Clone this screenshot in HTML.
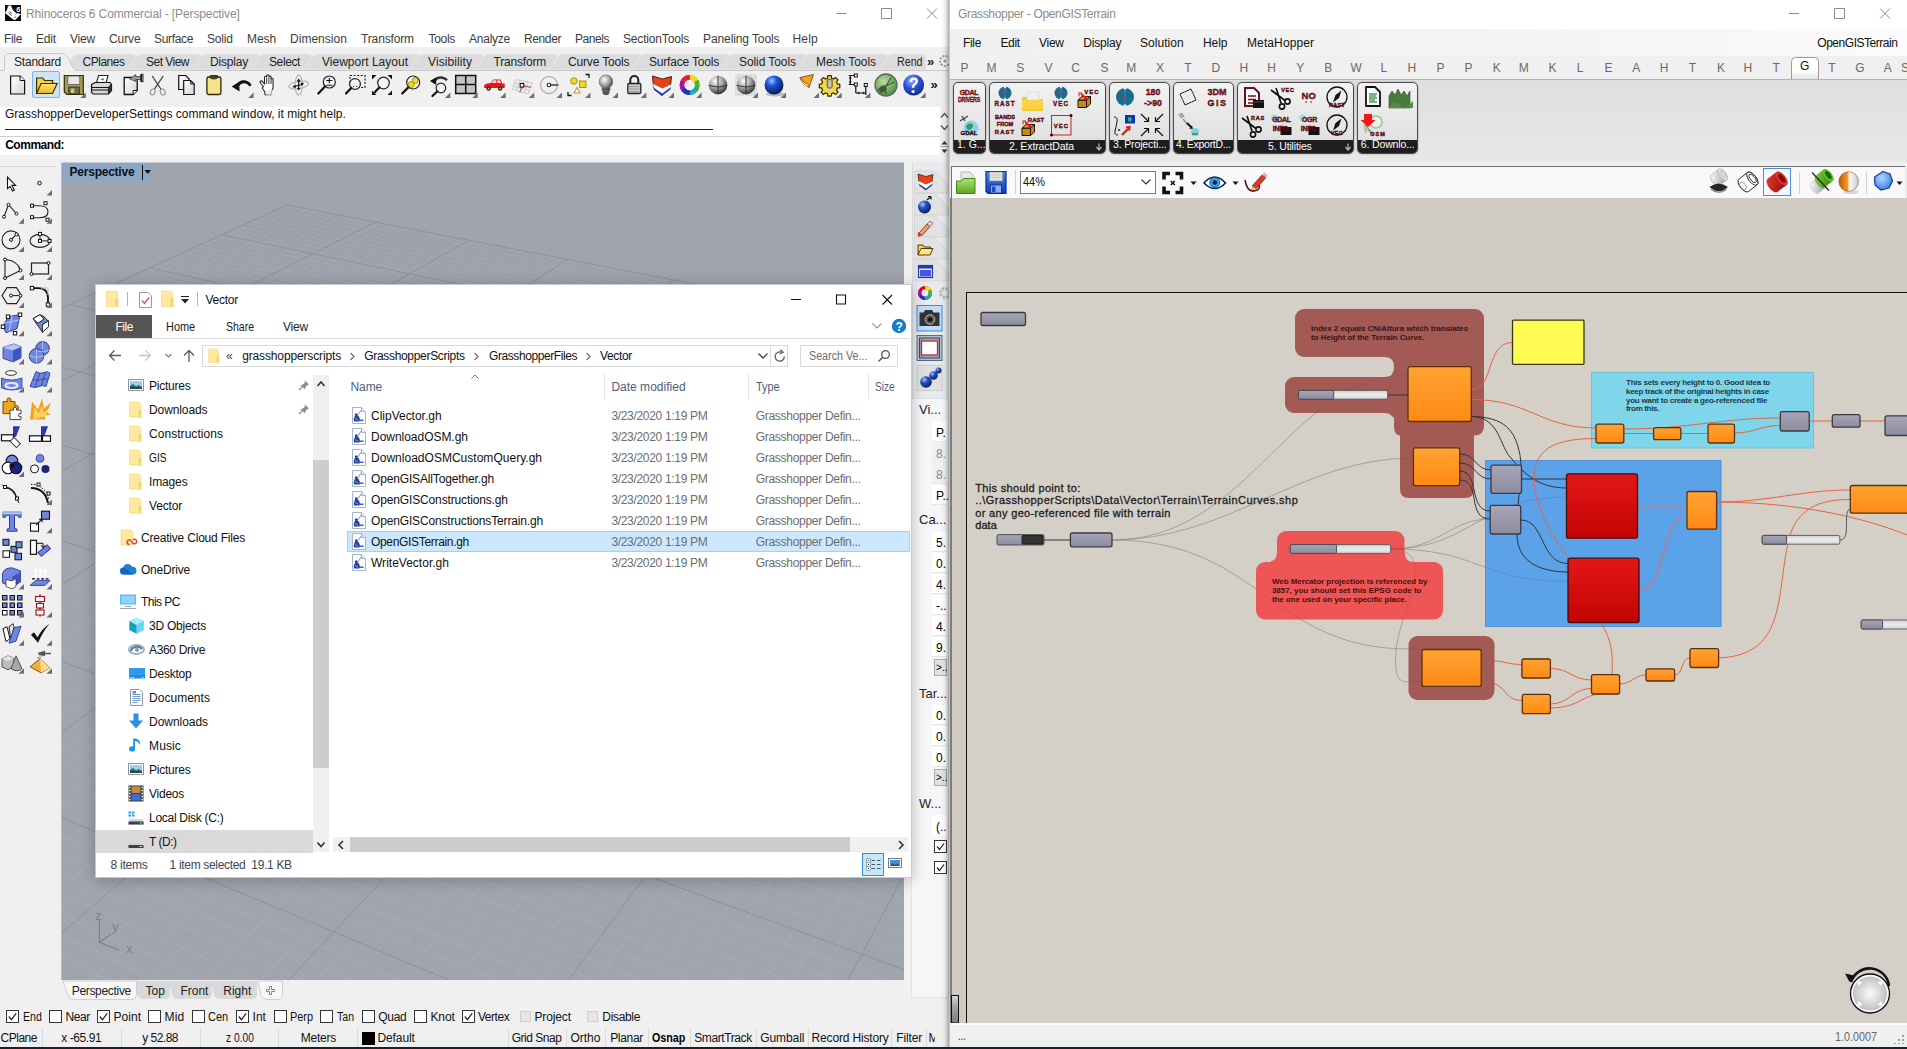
<!DOCTYPE html>
<html><head><meta charset="utf-8"><title>screen</title>
<style>
*{box-sizing:border-box;margin:0;padding:0}
html,body{width:1907px;height:1049px;overflow:hidden;background:#f0f0f0;font-family:"Liberation Sans",sans-serif;font-size:12px;color:#000}
.a{position:absolute}
.t{position:absolute;white-space:pre;line-height:1}
svg{overflow:visible}

</style></head><body>
<div class="a" style="left:0px;top:0px;width:949px;height:1049px;background:#f0f0f0;"></div>
<div class="a" style="left:0px;top:0px;width:949px;height:47px;background:#fff;"></div>
<div class="t" style="left:26.0px;top:7.8px;font-size:12.00px;color:#8c8c8c;letter-spacing:-0.11px;">Rhinoceros 6 Commercial - [Perspective]</div>
<svg class="a" style="left:5px;top:5px;" width="16" height="16" viewBox="0 0 16 16"><rect width="16" height="16" fill="#0a0a0a"/><path d="M2.500 0.800l3.500-0.300 1.800 4.500 3 2.700 5.200 1.300-5.500 5.800h-2l-8.500-6.800 1.500-2.500z" fill="#fff"/><path d="M1.200 5.500l1.800-4.500M3.500 8l3 2.500M4.500 6.500l2.500 2M9.500 13l1-1.500" stroke="#111" stroke-width="0.800"/><path d="M10.500 9l1.500-1" stroke="#111" stroke-width="0.700"/></svg>
<div class="t" style="left:16.2px;top:5.7px;font-size:7.50px;color:#fff;font-weight:bold;">6</div>
<svg class="a" style="left:830px;top:0px;" width="119" height="27" viewBox="0 0 119 27"><path d="M6.500 13.500h10M51.500 8.500h10v10h-10zM97 8.500l10 10M107 8.500l-10 10" fill="none" stroke="#8a8a8a" stroke-width="1"/></svg>
<div class="t" style="left:4.0px;top:32.8px;font-size:12.00px;color:#3c3c3c;letter-spacing:-0.34px;">File</div>
<div class="t" style="left:36.0px;top:32.8px;font-size:12.00px;color:#3c3c3c;letter-spacing:-0.17px;">Edit</div>
<div class="t" style="left:70.0px;top:32.8px;font-size:12.00px;color:#3c3c3c;letter-spacing:-0.20px;">View</div>
<div class="t" style="left:109.0px;top:32.8px;font-size:12.00px;color:#3c3c3c;letter-spacing:-0.10px;">Curve</div>
<div class="t" style="left:154.0px;top:32.8px;font-size:12.00px;color:#3c3c3c;letter-spacing:-0.34px;">Surface</div>
<div class="t" style="left:207.0px;top:32.8px;font-size:12.00px;color:#3c3c3c;letter-spacing:-0.22px;">Solid</div>
<div class="t" style="left:247.0px;top:32.8px;font-size:12.00px;color:#3c3c3c;letter-spacing:-0.09px;">Mesh</div>
<div class="t" style="left:290.0px;top:32.8px;font-size:12.00px;color:#3c3c3c;letter-spacing:0.03px;">Dimension</div>
<div class="t" style="left:361.0px;top:32.8px;font-size:12.00px;color:#3c3c3c;letter-spacing:-0.14px;">Transform</div>
<div class="t" style="left:428.5px;top:32.8px;font-size:12.00px;color:#3c3c3c;letter-spacing:-0.30px;">Tools</div>
<div class="t" style="left:469.0px;top:32.8px;font-size:12.00px;color:#3c3c3c;letter-spacing:-0.24px;">Analyze</div>
<div class="t" style="left:524.0px;top:32.8px;font-size:12.00px;color:#3c3c3c;letter-spacing:-0.39px;">Render</div>
<div class="t" style="left:575.0px;top:32.8px;font-size:12.00px;color:#3c3c3c;letter-spacing:-0.45px;">Panels</div>
<div class="t" style="left:623.0px;top:32.8px;font-size:12.00px;color:#3c3c3c;letter-spacing:-0.17px;">SectionTools</div>
<div class="t" style="left:703.0px;top:32.8px;font-size:12.00px;color:#3c3c3c;letter-spacing:-0.10px;">Paneling Tools</div>
<div class="t" style="left:792.5px;top:32.8px;font-size:12.00px;color:#3c3c3c;letter-spacing:0.20px;">Help</div>
<svg class="a" style="left:0px;top:0px;" width="949" height="72" viewBox="0 0 949 72"><path d="M62.599999999999994 70 C68.6 70 70.6 54 77.6 54 H132.4 Q136.4 54 136.4 58 V70 Z" fill="#dcdcdc" stroke="#e9e9e9" stroke-width="1"/><path d="M126 70 C132 70 134 54 141 54 H197 Q201 54 201 58 V70 Z" fill="#dcdcdc" stroke="#e9e9e9" stroke-width="1"/><path d="M190 70 C196 70 198 54 205 54 H256 Q260 54 260 58 V70 Z" fill="#dcdcdc" stroke="#e9e9e9" stroke-width="1"/><path d="M249 70 C255 70 257 54 264 54 H308 Q312 54 312 58 V70 Z" fill="#dcdcdc" stroke="#e9e9e9" stroke-width="1"/><path d="M302 70 C308 70 310 54 317 54 H416 Q420 54 420 58 V70 Z" fill="#dcdcdc" stroke="#e9e9e9" stroke-width="1"/><path d="M408 70 C414 70 416 54 423 54 H480 Q484 54 484 58 V70 Z" fill="#dcdcdc" stroke="#e9e9e9" stroke-width="1"/><path d="M473.5 70 C479.5 70 481.5 54 488.5 54 H554 Q558 54 558 58 V70 Z" fill="#dcdcdc" stroke="#e9e9e9" stroke-width="1"/><path d="M548 70 C554 70 556 54 563 54 H637.4 Q641.4 54 641.4 58 V70 Z" fill="#dcdcdc" stroke="#e9e9e9" stroke-width="1"/><path d="M629 70 C635 70 637 54 644 54 H727 Q731 54 731 58 V70 Z" fill="#dcdcdc" stroke="#e9e9e9" stroke-width="1"/><path d="M719 70 C725 70 727 54 734 54 H804 Q808 54 808 58 V70 Z" fill="#dcdcdc" stroke="#e9e9e9" stroke-width="1"/><path d="M796 70 C802 70 804 54 811 54 H884 Q888 54 888 58 V70 Z" fill="#dcdcdc" stroke="#e9e9e9" stroke-width="1"/><path d="M877 70 C883 70 885 54 892 54 H922 Q926 54 926 58 V70 Z" fill="#dcdcdc" stroke="#e9e9e9" stroke-width="1"/><path d="M0 70.5 H4.5 V58 Q4.5 53.5 9 53.5 H62 C70 53.5 70 70.5 78 70.5 H949" fill="#f0f0f0" stroke="#c9c9c9" stroke-width="1"/></svg>
<div class="t" style="left:14.0px;top:56.2px;font-size:12.00px;color:#1e1e1e;letter-spacing:-0.21px;">Standard</div>
<div class="t" style="left:82.6px;top:56.2px;font-size:12.00px;color:#1e1e1e;letter-spacing:-0.51px;">CPlanes</div>
<div class="t" style="left:146.0px;top:56.2px;font-size:12.00px;color:#1e1e1e;letter-spacing:-0.52px;">Set View</div>
<div class="t" style="left:210.0px;top:56.2px;font-size:12.00px;color:#1e1e1e;letter-spacing:-0.19px;">Display</div>
<div class="t" style="left:269.0px;top:56.2px;font-size:12.00px;color:#1e1e1e;letter-spacing:-0.39px;">Select</div>
<div class="t" style="left:322.0px;top:56.2px;font-size:12.00px;color:#1e1e1e;letter-spacing:0.01px;">Viewport Layout</div>
<div class="t" style="left:428.0px;top:56.2px;font-size:12.00px;color:#1e1e1e;letter-spacing:0.09px;">Visibility</div>
<div class="t" style="left:493.5px;top:56.2px;font-size:12.00px;color:#1e1e1e;letter-spacing:-0.19px;">Transform</div>
<div class="t" style="left:568.0px;top:56.2px;font-size:12.00px;color:#1e1e1e;letter-spacing:-0.16px;">Curve Tools</div>
<div class="t" style="left:649.0px;top:56.2px;font-size:12.00px;color:#1e1e1e;letter-spacing:-0.19px;">Surface Tools</div>
<div class="t" style="left:739.0px;top:56.2px;font-size:12.00px;color:#1e1e1e;letter-spacing:-0.08px;">Solid Tools</div>
<div class="t" style="left:816.0px;top:56.2px;font-size:12.00px;color:#1e1e1e;letter-spacing:-0.05px;">Mesh Tools</div>
<div class="t" style="left:897.0px;top:56.2px;font-size:12.00px;color:#1e1e1e;transform:scaleX(0.889);transform-origin:0 0;">Rend</div>
<div class="t" style="left:927.0px;top:55.0px;font-size:13.00px;color:#222;font-weight:bold;">»</div>
<svg class="a" style="left:938px;top:52px;" width="11" height="20" viewBox="0 0 11 20"><circle cx="7" cy="9" r="5" fill="none" stroke="#9a9a9a" stroke-width="2" stroke-dasharray="2 1.4"/><circle cx="7" cy="9" r="1.6" fill="#9a9a9a"/></svg>
<div class="a" style="left:32px;top:71px;width:28px;height:27px;background:#cce4f7;border:1px solid #7eb4ea;border-radius:2px;"></div>
<div class="a" style="left:0px;top:107px;width:940px;height:29px;background:#fff;"></div>
<div class="a" style="left:0px;top:136px;width:940px;height:1px;background:#d0d0d0;"></div>
<div class="a" style="left:0px;top:137px;width:940px;height:18px;background:#fff;"></div>
<div class="t" style="left:5.0px;top:107.8px;font-size:12.00px;color:#111;letter-spacing:0.00px;">GrasshopperDeveloperSettings command window, it might help.</div>
<div class="a" style="left:5px;top:129px;width:708px;height:1px;background:#222;"></div>
<div class="t" style="left:5.2px;top:138.7px;font-size:12.00px;color:#000;letter-spacing:-0.48px;font-weight:bold;">Command:</div>
<svg class="a" style="left:940px;top:107px;" width="9" height="50" viewBox="0 0 9 50"><path d="M1 10.5l3.5-4 3.5 4M1 18.5l3.5 4 3.5-4" fill="none" stroke="#555" stroke-width="1.3"/><path d="M1.5 37.5h6l-3-3.5zM1.5 42.5h6l-3 3.5z" fill="#333"/><path d="M0 39.5h9" stroke="#aaa"/></svg>
<div class="a" style="left:61px;top:162px;width:843px;height:818px;background:#9fa4ad;border-top:1px solid #c9ced8;border-left:1px solid #b4bac6;"></div>
<svg class="a" style="left:62px;top:163px;overflow:hidden;" width="842" height="817" viewBox="62 163 842 817"><defs><linearGradient id="gmn" gradientUnits="userSpaceOnUse" x1="0" y1="200" x2="0" y2="980"><stop offset="0" stop-color="#969ca5"/><stop offset="0.35" stop-color="#a3a8b1"/><stop offset="1" stop-color="#a9aeb6"/></linearGradient></defs><path d="M295.3 206.6L-26741.8 12746.1M280.5 207.8L15308.1 3143.4M304.0 208.3L-26472.1 12747.2M274.2 210.6L15704.6 3245.3M312.7 209.9L-26202.5 12748.2M267.9 213.5L16124.7 3353.2M321.5 211.7L-25932.8 12749.3M261.5 216.5L16570.5 3467.8M330.3 213.4L-25663.2 12750.3M255.0 219.5L17044.5 3589.6M339.2 215.1L-25393.5 12751.3M248.5 222.5L17549.5 3719.3M348.1 216.8L-25123.8 12752.4M241.9 225.5L18088.5 3857.8M357.1 218.6L-24854.2 12753.4M235.2 228.5L18665.2 4006.0M366.1 220.3L-24584.5 12754.4M228.5 231.6L19283.6 4164.9M384.3 223.8L-24045.2 12756.5M214.9 237.9L20665.1 4519.9M393.4 225.6L-23775.6 12757.6M207.9 241.1L21439.9 4719.0M402.7 227.4L-23505.9 12758.6M200.9 244.3L22280.3 4935.0M411.9 229.2L-23236.2 12759.6M193.8 247.6L23195.0 5170.0M421.3 231.0L-22966.6 12760.7M186.7 250.8L24194.2 5426.8M430.7 232.8L-22696.9 12761.7M179.5 254.2L25290.2 5708.4M440.1 234.7L-22427.3 12762.7M172.2 257.5L26497.8 6018.7M449.6 236.5L-22157.6 12763.8M164.8 260.9L27835.0 6362.3M459.1 238.4L-21888.0 12764.8M157.4 264.3L29323.8 6744.9M478.4 242.1L-21348.6 12766.9M142.2 271.3L32872.6 7656.8M488.1 244.0L-21079.0 12767.9M134.5 274.8L35010.6 8206.2M497.9 245.9L-20809.3 12769.0M126.7 278.4L37462.1 8836.1M507.7 247.8L-20539.7 12770.0M118.9 282.0L40301.5 9565.7M517.6 249.7L-20270.0 12771.0M110.9 285.6L43628.8 10420.7M527.6 251.6L-20000.4 12772.1M102.9 289.3L47581.5 11436.4M537.6 253.6L-19730.7 12773.1M94.8 293.1L52354.4 12662.8M547.6 255.5L-19461.0 12774.2M86.5 296.8L53546.7 13055.0M557.8 257.5L-19191.4 12775.2M78.2 300.7L53074.5 13053.2M578.2 261.5L-18652.1 12777.3M61.3 308.4L52130.0 13049.6M588.5 263.5L-18382.4 12778.3M52.8 312.4L51657.8 13047.8M598.9 265.5L-18112.8 12779.3M44.1 316.4L51185.5 13045.9M609.3 267.5L-17843.1 12780.4M35.3 320.4L50713.3 13044.1M619.8 269.5L-17573.4 12781.4M26.4 324.5L50241.0 13042.3M630.4 271.6L-17303.8 12782.5M17.4 328.6L49768.8 13040.5M641.0 273.6L-17034.1 12783.5M8.3 332.8L49296.5 13038.7M651.7 275.7L-16764.5 12784.5M-0.9 337.0L48824.3 13036.9M662.4 277.8L-16494.8 12785.6M-10.2 341.3L48352.0 13035.0M684.1 282.0L-15955.5 12787.6M-29.2 350.0L47407.6 13031.4M695.1 284.2L-15685.8 12788.7M-38.9 354.5L46935.3 13029.6M706.1 286.3L-15416.2 12789.7M-48.6 358.9L46463.1 13027.8M717.2 288.4L-15146.5 12790.8M-58.5 363.5L45990.8 13026.0M728.4 290.6L-14876.9 12791.8M-68.5 368.1L45518.6 13024.1M739.6 292.8L-14607.2 12792.8M-78.7 372.7L45046.3 13022.3M750.9 295.0L-14337.6 12793.9M-88.9 377.5L44574.1 13020.5M762.3 297.2L-14067.9 12794.9M-99.3 382.2L44101.9 13018.7M773.8 299.4L-13798.2 12795.9M-109.8 387.1L43629.6 13016.9M796.9 303.9L-13258.9 12798.0M-131.3 396.9L42685.1 13013.2M808.5 306.2L-12989.3 12799.1M-142.2 401.9L42212.9 13011.4M820.3 308.4L-12719.6 12800.1M-153.3 407.0L41740.6 13009.6M832.1 310.7L-12450.0 12801.1M-164.5 412.2L41268.4 13007.8M844.0 313.0L-12180.3 12802.2M-175.9 417.4L40796.1 13006.0M856.0 315.4L-11910.6 12803.2M-187.4 422.7L40323.9 13004.2M868.0 317.7L-11641.0 12804.2M-199.0 428.0L39851.7 13002.3M880.2 320.1L-11371.3 12805.3M-210.9 433.5L39379.4 13000.5M892.4 322.4L-11101.7 12806.3M-222.8 439.0L38907.2 12998.7M917.0 327.2L-10562.4 12808.4M-247.3 450.2L37962.7 12995.1M929.5 329.6L-10292.7 12809.4M-259.7 455.9L37490.4 12993.3M942.0 332.1L-10023.0 12810.5M-272.4 461.7L37018.2 12991.4M954.6 334.5L-9753.4 12811.5M-285.2 467.6L36546.0 12989.6M967.3 337.0L-9483.7 12812.5M-298.2 473.6L36073.7 12987.8M980.1 339.5L-9214.1 12813.6M-311.4 479.7L35601.5 12986.0M993.0 342.0L-8944.4 12814.6M-324.8 485.8L35129.2 12984.2M1006.0 344.5L-8674.8 12815.7M-338.3 492.0L34657.0 12982.4M1019.0 347.0L-8405.1 12816.7M-352.1 498.3L34184.7 12980.5M1045.4 352.1L-7865.8 12818.8M-380.2 511.3L33240.2 12976.9M1058.7 354.7L-7596.1 12819.8M-394.6 517.9L32768.0 12975.1M1072.1 357.3L-7326.5 12820.8M-409.1 524.6L32295.8 12973.3M1085.6 359.9L-7056.8 12821.9M-423.9 531.4L31823.5 12971.5M1099.2 362.6L-6787.2 12822.9M-439.0 538.3L31351.3 12969.6M1112.9 365.2L-6517.5 12824.0M-454.2 545.3L30879.0 12967.8M1126.7 367.9L-6247.8 12825.0M-469.7 552.4L30406.8 12966.0M1140.6 370.6L-5978.2 12826.0M-485.4 559.6L29934.5 12964.2M1154.6 373.3L-5708.5 12827.1M-501.4 566.9L29462.3 12962.4M1182.8 378.8L-5169.2 12829.1M-534.1 581.9L28517.8 12958.7M1197.1 381.6L-4899.6 12830.2M-550.8 589.6L28045.6 12956.9M1211.5 384.4L-4629.9 12831.2M-567.8 597.4L27573.3 12955.1M1226.0 387.2L-4360.2 12832.3M-585.1 605.4L27101.1 12953.3M1240.5 390.0L-4090.6 12833.3M-602.6 613.4L26628.8 12951.5M1255.2 392.8L-3820.9 12834.3M-620.5 621.6L26156.6 12949.6M1270.0 395.7L-3551.3 12835.4M-638.6 630.0L25684.3 12947.8M1284.9 398.6L-3281.6 12836.4M-657.0 638.4L25212.1 12946.0M1299.9 401.5L-3012.0 12837.4M-675.8 647.0L24739.9 12944.2M1330.3 407.4L-2472.6 12839.5M-714.2 664.7L23795.4 12940.6M1345.6 410.4L-2203.0 12840.5M-734.0 673.8L23323.1 12938.7M1361.1 413.4L-1933.3 12841.6M-754.0 683.0L22850.9 12936.9M1376.7 416.4L-1663.7 12842.6M-774.5 692.4L22378.6 12935.1M1392.4 419.5L-1394.0 12843.7M-795.2 701.9L21906.4 12933.3M1408.2 422.5L-1124.4 12844.7M-816.4 711.6L21434.2 12931.5M1424.1 425.6L-854.7 12845.7M-837.9 721.5L20961.9 12929.7M1440.1 428.7L-585.0 12846.8M-859.9 731.6L20489.7 12927.8M1456.3 431.9L-315.4 12847.8M-882.2 741.9L20017.4 12926.0M1489.0 438.2L223.9 12849.9M-928.1 763.0L19072.9 12922.4M1505.5 441.4L493.6 12850.9M-951.7 773.8L18600.7 12920.6M1522.2 444.6L763.2 12852.0M-975.8 784.9L18128.4 12918.8M1539.0 447.9L1032.9 12853.0M-1000.3 796.1L17656.2 12916.9M1555.9 451.2L1302.6 12854.0M-1025.3 807.6L17184.0 12915.1M1573.0 454.5L1572.2 12855.1M-1050.8 819.3L16711.7 12913.3M1590.1 457.8L1841.9 12856.1M-1076.8 831.3L16239.5 12911.5M1607.5 461.2L2111.5 12857.1M-1103.3 843.4L15767.2 12909.7M1624.9 464.6L2381.2 12858.2M-1130.3 855.9L15295.0 12907.9M1660.2 471.4L2920.5 12860.3M-1186.1 881.5L14350.5 12904.2M1678.1 474.9L3190.2 12861.3M-1214.9 894.7L13878.2 12902.4M1696.1 478.4L3459.8 12862.3M-1244.2 908.2L13406.0 12900.6M1714.3 481.9L3729.5 12863.4M-1274.2 922.0L12933.8 12898.8M1732.6 485.5L3999.1 12864.4M-1304.9 936.0L12461.5 12897.0M1751.0 489.1L4268.8 12865.4M-1336.2 950.4L11989.3 12895.1M1769.6 492.7L4538.4 12866.5M-1368.1 965.1L11517.0 12893.3M1788.4 496.3L4808.1 12867.5M-1400.8 980.1L11044.8 12891.5M1807.3 500.0L5077.8 12868.6M-1434.3 995.5L10572.5 12889.7M1845.5 507.4L5617.1 12870.6M-1503.5 1027.3L9628.1 12886.1M1864.9 511.2L5886.7 12871.7M-1539.3 1043.7L9155.8 12884.2M1884.4 514.9L6156.4 12872.7M-1575.9 1060.5L8683.6 12882.4M1904.1 518.8L6426.0 12873.7M-1613.4 1077.8L8211.3 12880.6M1924.0 522.6L6695.7 12874.8M-1651.8 1095.4L7739.1 12878.8M1944.0 526.5L6965.4 12875.8M-1691.2 1113.5L7266.8 12877.0M1964.2 530.4L7235.0 12876.9M-1731.5 1132.0L6794.6 12875.2M1984.6 534.4L7504.7 12877.9M-1772.8 1151.0L6322.3 12873.3M2005.1 538.4L7774.3 12878.9M-1815.2 1170.5L5850.1 12871.5M2046.7 546.4L8313.6 12881.0M-1903.3 1210.9L4905.6 12867.9M2067.8 550.5L8583.3 12882.0M-1949.1 1232.0L4433.4 12866.1M2089.1 554.7L8853.0 12883.1M-1996.1 1253.6L3961.1 12864.3M2110.5 558.8L9122.6 12884.1M-2044.3 1275.7L3488.9 12862.4M2132.1 563.0L9392.3 12885.2M-2093.9 1298.5L3016.6 12860.6M2154.0 567.2L9661.9 12886.2M-2144.9 1321.9L2544.4 12858.8M2176.0 571.5L9931.6 12887.2M-2197.3 1346.0L2072.2 12857.0M2198.2 575.8L10201.2 12888.3M-2251.2 1370.8L1599.9 12855.2M2220.6 580.2L10470.9 12889.3M-2306.7 1396.2L1127.7 12853.4M2266.0 589.0L11010.2 12891.4M-2422.6 1449.5L183.2 12849.7M2289.0 593.4L11279.9 12892.4M-2483.2 1477.3L-289.1 12847.9M2312.2 598.0L11549.5 12893.5M-2545.6 1506.0L-761.3 12846.1M2335.6 602.5L11819.2 12894.5M-2610.0 1535.6L-1233.6 12844.3M2359.3 607.1L12088.8 12895.5M-2676.5 1566.1L-1705.8 12842.5M2383.1 611.7L12358.5 12896.6M-2745.1 1597.6L-2178.0 12840.6M2407.2 616.4L12628.2 12897.6M-2815.9 1630.2L-2650.3 12838.8M2431.5 621.1L12897.8 12898.6M-2889.2 1663.8L-3122.5 12837.0M2456.1 625.9L13167.5 12899.7M-2964.9 1698.6L-3594.8 12835.2M2505.8 635.5L13706.8 12901.8M-3124.3 1771.8L-4539.3 12831.6M2531.0 640.4L13976.4 12902.8M-3208.2 1810.4L-5011.5 12829.7M2556.5 645.4L14246.1 12903.8M-3295.2 1850.4L-5483.7 12827.9M2582.2 650.3L14515.8 12904.9M-3385.5 1891.8L-5956.0 12826.1M2608.1 655.4L14785.4 12905.9M-3479.1 1934.8L-6428.2 12824.3M2634.4 660.5L15055.1 12906.9M-3576.4 1979.5L-6900.5 12822.5M2660.8 665.6L15324.7 12908.0M-3677.5 2026.0L-7372.7 12820.7M2687.5 670.8L15594.4 12909.0M-3782.6 2074.3L-7845.0 12818.8M2714.5 676.0L15864.1 12910.1M-3892.0 2124.5L-8317.2 12817.0M2769.2 686.6L16403.4 12912.1M-4124.9 2231.5L-9261.7 12813.4M2797.0 692.0L16673.0 12913.2M-4248.9 2288.5L-9733.9 12811.6M2825.1 697.5L16942.7 12914.2M-4378.4 2348.0L-10206.2 12809.8M2853.4 703.0L17212.3 12915.2M-4513.9 2410.2L-10678.4 12807.9M2882.0 708.5L17482.0 12916.3M-4655.6 2475.3L-11150.7 12806.1M2910.9 714.1L17751.7 12917.3M-4804.1 2543.5L-11622.9 12804.3M2940.1 719.8L18021.3 12918.4M-4959.9 2615.1L-12095.2 12802.5M2969.6 725.5L18291.0 12919.4M-5123.4 2690.2L-12567.4 12800.7M2999.4 731.3L18560.6 12920.4M-5295.4 2769.2L-13039.6 12798.9M3059.9 743.0L19099.9 12922.5M-5667.2 2940.0L-13984.1 12795.2M3090.7 749.0L19369.6 12923.5M-5868.6 3032.5L-14456.4 12793.4M3121.7 755.0L19639.3 12924.6M-6081.6 3130.4L-14928.6 12791.6M3153.1 761.1L19908.9 12925.6M-6307.1 3234.0L-15400.9 12789.8M3184.8 767.3L20178.6 12926.7M-6546.3 3343.8L-15873.1 12788.0M3216.9 773.5L20448.2 12927.7M-6800.5 3460.6L-16345.4 12786.1M3249.2 779.8L20717.9 12928.7M-7071.1 3584.9L-16817.6 12784.3M3282.0 786.1L20987.5 12929.8M-7359.8 3717.5L-17289.8 12782.5M3315.1 792.6L21257.2 12930.8M-7668.4 3859.3L-17762.1 12780.7M3382.4 805.6L21796.5 12932.9M-8354.4 4174.4L-18706.6 12777.1M3416.5 812.2L22066.2 12933.9M-8737.0 4350.2L-19178.8 12775.2M3451.1 819.0L22335.8 12935.0M-9150.4 4540.1L-19651.1 12773.4M3486.1 825.7L22605.5 12936.0M-9598.2 4745.8L-20123.3 12771.6M3521.4 832.6L22875.1 12937.0M-10085.1 4969.5L-20595.5 12769.8M3557.1 839.5L23144.8 12938.1M-10616.4 5213.6L-21067.8 12768.0M3593.3 846.5L23414.5 12939.1M-11198.4 5480.9L-21540.0 12766.2M3629.8 853.6L23684.1 12940.1M-11838.8 5775.1L-22012.3 12764.3M3666.8 860.8L23953.8 12941.2M-12546.8 6100.4L-22484.5 12762.5M3742.0 875.4L24493.1 12943.3M-14213.5 6866.0L-23429.0 12758.9M3780.3 882.8L24762.7 12944.3M-15203.7 7320.9L-23901.3 12757.1M3819.0 890.3L25032.4 12945.3M-16326.3 7836.6L-24373.5 12755.3M3858.2 897.9L25302.1 12946.4M-17610.0 8426.3L-24845.7 12753.4M3897.8 905.6L25571.7 12947.4M-19092.1 9107.1L-25318.0 12751.6M3937.9 913.4L25841.4 12948.4M-20822.4 9902.0L-25790.2 12749.8M3978.5 921.3L26111.0 12949.5M-22868.8 10842.1L-26262.5 12748.0M4019.6 929.3L26380.7 12950.5M-25326.9 11971.3L-26734.7 12746.2M4061.1 937.3L26650.3 12951.5M4145.8 953.8L27189.7 12953.6M4188.9 962.1L27459.3 12954.7M4232.6 970.6L27729.0 12955.7M4276.8 979.2L27998.6 12956.7M4321.5 987.9L28268.3 12957.8M4366.8 996.6L28537.9 12958.8M4412.7 1005.6L28807.6 12959.8M4459.2 1014.6L29077.3 12960.9M4506.3 1023.7L29346.9 12961.9M4602.3 1042.3L29886.2 12964.0M4651.2 1051.8L30155.9 12965.0M4700.8 1061.5L30425.5 12966.1M4751.1 1071.2L30695.2 12967.1M4802.0 1081.1L30964.9 12968.1M4853.6 1091.1L31234.5 12969.2M4905.9 1101.3L31504.2 12970.2M4959.0 1111.6L31773.8 12971.3M5012.7 1122.0L32043.5 12972.3M5122.5 1143.3L32582.8 12974.4M5178.6 1154.2L32852.5 12975.4M5235.4 1165.2L33122.1 12976.4M5293.1 1176.4L33391.8 12977.5M5351.6 1187.7L33661.4 12978.5M5410.9 1199.2L33931.1 12979.6M5471.1 1210.9L34200.7 12980.6M5532.2 1222.8L34470.4 12981.6M5594.2 1234.8L34740.1 12982.7M5720.9 1259.4L35279.4 12984.7M5785.7 1272.0L35549.0 12985.8M5851.5 1284.8L35818.7 12986.8M5918.4 1297.7L36088.3 12987.9M5986.2 1310.9L36358.0 12988.9M6055.1 1324.3L36627.7 12989.9M6125.1 1337.8L36897.3 12991.0M6196.2 1351.6L37167.0 12992.0M6268.5 1365.7L37436.6 12993.0M6416.5 1394.4L37975.9 12995.1M6492.3 1409.1L38245.6 12996.2M6569.4 1424.1L38515.3 12997.2M6647.7 1439.3L38784.9 12998.2M6727.4 1454.7L39054.6 12999.3M6808.4 1470.4L39324.2 13000.3M6890.8 1486.4L39593.9 13001.3M6974.6 1502.7L39863.5 13002.4M7059.9 1519.2L40133.2 13003.4M7235.0 1553.2L40672.5 13005.5M7324.8 1570.7L40942.2 13006.5M7416.3 1588.4L41211.8 13007.6M7509.5 1606.5L41481.5 13008.6M7604.3 1624.9L41751.1 13009.6M7701.0 1643.6L42020.8 13010.7M7799.4 1662.7L42290.5 13011.7M7899.6 1682.2L42560.1 13012.8M8001.8 1702.0L42829.8 13013.8M8212.1 1742.8L43369.1 13015.9M8320.4 1763.8L43638.7 13016.9M8430.7 1785.2L43908.4 13017.9M8543.3 1807.1L44178.1 13019.0M8658.2 1829.4L44447.7 13020.0M8775.4 1852.1L44717.4 13021.1M8895.0 1875.3L44987.0 13022.1M9017.1 1899.0L45256.7 13023.1M9141.7 1923.2L45526.3 13024.2M9399.0 1973.2L46065.7 13026.2M9531.9 1998.9L46335.3 13027.3M9667.7 2025.3L46605.0 13028.3M9806.5 2052.2L46874.6 13029.4M9948.4 2079.7L47144.3 13030.4M10093.5 2107.9L47413.9 13031.4M10241.9 2136.7L47683.6 13032.5M10393.8 2166.2L47953.3 13033.5M10549.3 2196.4L48222.9 13034.5M10871.4 2258.9L48762.2 13036.6M11038.4 2291.3L49031.9 13037.7M11209.4 2324.5L49301.5 13038.7M11384.7 2358.5L49571.2 13039.7M11564.5 2393.4L49840.9 13040.8M11748.9 2429.1L50110.5 13041.8M11938.0 2465.8L50380.2 13042.8M12132.1 2503.5L50649.8 13043.9M12331.4 2542.2L50919.5 13044.9M12746.2 2622.7L51458.8 13047.0M12962.3 2664.6L51728.5 13048.0M13184.4 2707.7L51998.1 13049.1M13412.9 2752.0L52267.8 13050.1M13648.0 2797.7L52537.4 13051.1M13889.9 2844.6L52807.1 13052.2M14139.1 2893.0L53076.7 13053.2M14395.8 2942.8L53346.4 13054.2M14660.4 2994.1L53616.1 13055.3" stroke="url(#gmn)" stroke-width="0.8" fill="none"/><path d="M286.7 204.9L-27011.4 12745.1M286.7 204.9L14933.2 3047.1M375.2 222.1L-24314.9 12755.5M221.7 234.8L19948.4 4335.8M468.7 240.2L-21618.3 12765.9M149.8 267.8L30991.5 7173.4M567.9 259.5L-18921.7 12776.2M69.8 304.5L52602.2 13051.4M673.3 279.9L-16225.2 12786.6M-19.7 345.6L47879.8 13033.2M785.3 301.6L-13528.6 12797.0M-120.5 392.0L43157.4 13015.1M904.7 324.8L-10832.0 12807.4M-235.0 444.5L38434.9 12996.9M1032.2 349.6L-8135.4 12817.7M-366.0 504.8L33712.5 12978.7M1168.6 376.0L-5438.9 12828.1M-517.6 574.4L28990.1 12960.6M1315.1 404.5L-2742.3 12838.5M-694.8 655.8L24267.6 12942.4M1472.6 435.0L-45.7 12848.8M-904.9 752.3L19545.2 12924.2M1642.5 468.0L2650.8 12859.2M-1157.9 868.5L14822.7 12906.0M1826.3 503.7L5347.4 12869.6M-1468.5 1011.2L10100.3 12887.9M2025.9 542.4L8044.0 12880.0M-1858.7 1190.4L5377.9 12869.7M2243.2 584.6L10740.6 12890.3M-2363.8 1422.5L655.4 12851.5M2480.8 630.7L13437.1 12900.7M-3043.2 1734.6L-4067.0 12833.4M2741.7 681.3L16133.7 12911.1M-4006.0 2176.9L-8789.5 12815.2M3029.5 737.1L18830.3 12921.5M-5476.4 2852.3L-13511.9 12797.0M3348.5 799.0L21526.9 12931.8M-7999.1 4011.2L-18234.3 12778.9M3704.2 868.1L24223.4 12942.2M-13333.7 6461.8L-22956.8 12760.7M4103.2 945.5L26920.0 12952.6M4554.0 1033.0L29616.6 12963.0M5067.3 1132.6L32313.1 12973.3M5657.1 1247.0L35009.7 12983.7M6341.9 1379.9L37706.3 12994.1M7146.7 1536.1L40402.9 13004.5M8106.0 1722.2L43099.4 13014.8M9269.0 1947.9L45796.0 13025.2M10708.4 2227.2L48492.6 13035.6M12536.0 2581.9L51189.1 13046.0M14933.2 3047.1L53885.7 13056.3" stroke="#8c919a" stroke-width="1" fill="none"/></svg>
<div class="a" style="left:62px;top:163px;width:90px;height:18px;background:#8ea6c6;"></div>
<div class="t" style="left:69.6px;top:166.1px;font-size:12.00px;color:#0b1220;letter-spacing:-0.24px;font-weight:bold;">Perspective</div>
<div class="a" style="left:142px;top:165px;width:1px;height:15px;background:#111;"></div>
<svg class="a" style="left:144px;top:168px;" width="8" height="8" viewBox="0 0 8 8"><path d="M0.5 2h6.500l-3.250 4z" fill="#111"/></svg>
<svg class="a" style="left:90px;top:905px;" width="60" height="50" viewBox="0 0 60 50"><path d="M9.5 14V37.5L29 45" fill="none" stroke="#7d828b" stroke-width="1.2"/><path d="M9.5 37.5L21 29" stroke="#7d828b" stroke-width="1.2"/></svg>
<div class="t" style="left:95.0px;top:909.0px;font-size:13.00px;color:#7d828b;">z</div>
<div class="t" style="left:112.0px;top:920.0px;font-size:13.00px;color:#7d828b;">y</div>
<div class="t" style="left:126.0px;top:942.0px;font-size:13.00px;color:#7d828b;">x</div>
<div class="a" style="left:0px;top:166px;width:56px;height:1px;background:#d8d8d8;"></div>
<div class="a" style="left:905px;top:162px;width:44px;height:830px;background:#f0f0f0;"></div>
<div class="a" style="left:912px;top:162px;width:37px;height:236px;background:#e9eaee;border-left:1px solid #d9d9dd;"></div>
<div class="a" style="left:911px;top:398px;width:38px;height:600px;background:#f6f6f8;border:1px solid #e2e2e6;"></div>
<div class="t" style="left:919.0px;top:403.0px;font-size:13.00px;color:#222;">Vi...</div>
<div class="a" style="left:932px;top:422px;width:15px;height:20px;background:#fff;border-bottom:1px solid #e6e6e6;"></div>
<div class="t" style="left:936.0px;top:427.3px;font-size:12.00px;color:#000;">P.</div>
<div class="a" style="left:932px;top:443px;width:15px;height:20px;background:#f0f0f0;border-bottom:1px solid #e6e6e6;"></div>
<div class="t" style="left:936.0px;top:448.3px;font-size:12.00px;color:#8a8a8a;">8.</div>
<div class="a" style="left:932px;top:464px;width:15px;height:20px;background:#f0f0f0;border-bottom:1px solid #e6e6e6;"></div>
<div class="t" style="left:936.0px;top:469.3px;font-size:12.00px;color:#8a8a8a;">8.</div>
<div class="a" style="left:932px;top:485px;width:15px;height:20px;background:#fff;border-bottom:1px solid #e6e6e6;"></div>
<div class="t" style="left:936.0px;top:490.3px;font-size:12.00px;color:#000;">P..</div>
<div class="t" style="left:919.0px;top:513.0px;font-size:13.00px;color:#222;">Ca...</div>
<div class="a" style="left:932px;top:532px;width:15px;height:20px;background:#fff;border-bottom:1px solid #e6e6e6;"></div>
<div class="t" style="left:936.0px;top:537.3px;font-size:12.00px;color:#000;">5.</div>
<div class="a" style="left:932px;top:553px;width:15px;height:20px;background:#fff;border-bottom:1px solid #e6e6e6;"></div>
<div class="t" style="left:936.0px;top:558.3px;font-size:12.00px;color:#000;">0.</div>
<div class="a" style="left:932px;top:574px;width:15px;height:20px;background:#fff;border-bottom:1px solid #e6e6e6;"></div>
<div class="t" style="left:936.0px;top:579.3px;font-size:12.00px;color:#000;">4.</div>
<div class="a" style="left:932px;top:595px;width:15px;height:20px;background:#fff;border-bottom:1px solid #e6e6e6;"></div>
<div class="t" style="left:936.0px;top:600.3px;font-size:12.00px;color:#000;">-..</div>
<div class="a" style="left:932px;top:616px;width:15px;height:20px;background:#fff;border-bottom:1px solid #e6e6e6;"></div>
<div class="t" style="left:936.0px;top:621.3px;font-size:12.00px;color:#000;">4.</div>
<div class="a" style="left:932px;top:637px;width:15px;height:20px;background:#fff;border-bottom:1px solid #e6e6e6;"></div>
<div class="t" style="left:936.0px;top:642.3px;font-size:12.00px;color:#000;">9.</div>
<div class="a" style="left:934px;top:659px;width:13px;height:17px;background:#e1e1e1;border:1px solid #adadad;"></div>
<div class="t" style="left:936.0px;top:662.5px;font-size:10.00px;color:#000;">&gt;..</div>
<div class="t" style="left:919.0px;top:687.0px;font-size:13.00px;color:#222;">Tar...</div>
<div class="a" style="left:932px;top:705px;width:15px;height:20px;background:#fff;border-bottom:1px solid #e6e6e6;"></div>
<div class="t" style="left:936.0px;top:710.3px;font-size:12.00px;color:#000;">0.</div>
<div class="a" style="left:932px;top:726px;width:15px;height:20px;background:#fff;border-bottom:1px solid #e6e6e6;"></div>
<div class="t" style="left:936.0px;top:731.3px;font-size:12.00px;color:#000;">0.</div>
<div class="a" style="left:932px;top:747px;width:15px;height:20px;background:#fff;border-bottom:1px solid #e6e6e6;"></div>
<div class="t" style="left:936.0px;top:752.3px;font-size:12.00px;color:#000;">0.</div>
<div class="a" style="left:934px;top:769px;width:13px;height:17px;background:#e1e1e1;border:1px solid #adadad;"></div>
<div class="t" style="left:936.0px;top:772.5px;font-size:10.00px;color:#000;">&gt;..</div>
<div class="t" style="left:919.0px;top:797.0px;font-size:13.00px;color:#222;">W...</div>
<div class="a" style="left:932px;top:815px;width:15px;height:20px;background:#fff;"></div>
<div class="t" style="left:936.0px;top:820.8px;font-size:12.00px;color:#000;">(..</div>
<div class="a" style="left:934px;top:840px;width:13px;height:13px;background:#fff;border:1px solid #333;"></div>
<svg class="a" style="left:934px;top:840px;" width="13" height="13" viewBox="0 0 13 13"><path d="M3 6.5l2.5 3 4.5-6" fill="none" stroke="#222" stroke-width="1.2"/></svg>
<div class="a" style="left:934px;top:861px;width:13px;height:13px;background:#fff;border:1px solid #333;"></div>
<svg class="a" style="left:934px;top:861px;" width="13" height="13" viewBox="0 0 13 13"><path d="M3 6.5l2.5 3 4.5-6" fill="none" stroke="#222" stroke-width="1.2"/></svg>
<svg class="a" style="left:0px;top:0px;" width="300" height="1049" viewBox="0 0 300 1049"><path d="M134 981 H170 V994 Q170 999 165 999 H143 Q138 999 137 994 Z" fill="#d9d9d9"/><path d="M169 981 H212 V994 Q212 999 207 999 H178 Q173 999 172 994 Z" fill="#d9d9d9"/><path d="M211 981 H257 V994 Q257 999 252 999 H220 Q215 999 214 994 Z" fill="#d9d9d9"/><path d="M63 981 H136.5 V994 Q136.5 999.5 131 999.5 H75 Q69 999.5 67 993 Z" fill="#f7f7f7" stroke="#cfcfcf"/><path d="M258 981 H282.5 V994 Q282.5 999.5 277 999.5 H268 Q262 999.5 260.5 993 Z" fill="#f7f7f7" stroke="#cfcfcf"/><path d="M266.5 989.5h3v-3h2v3h3v2h-3v3h-2v-3h-3z" fill="#f7f7f7" stroke="#777" stroke-width="0.9"/></svg>
<div class="t" style="left:71.7px;top:984.8px;font-size:12.00px;color:#222;letter-spacing:-0.31px;">Perspective</div>
<div class="t" style="left:145.5px;top:984.8px;font-size:12.00px;color:#222;letter-spacing:0.05px;">Top</div>
<div class="t" style="left:180.5px;top:984.8px;font-size:12.00px;color:#222;letter-spacing:-0.02px;">Front</div>
<div class="t" style="left:223.3px;top:984.8px;font-size:12.00px;color:#222;letter-spacing:-0.02px;">Right</div>
<div class="a" style="left:6px;top:1010px;width:13px;height:13px;background:#fff;border:1px solid #333;"></div>
<svg class="a" style="left:6px;top:1010px;" width="13" height="13" viewBox="0 0 13 13"><path d="M2.8 6.5l2.6 3.2 4.8-6.4" fill="none" stroke="#222" stroke-width="1.2"/></svg>
<div class="t" style="left:22.7px;top:1010.8px;font-size:12.00px;color:#111;transform:scaleX(0.880);transform-origin:0 0;">End</div>
<div class="a" style="left:49px;top:1010px;width:13px;height:13px;background:#fff;border:1px solid #333;"></div>
<div class="t" style="left:65.4px;top:1010.8px;font-size:12.00px;color:#111;letter-spacing:-0.38px;">Near</div>
<div class="a" style="left:97px;top:1010px;width:13px;height:13px;background:#fff;border:1px solid #333;"></div>
<svg class="a" style="left:97px;top:1010px;" width="13" height="13" viewBox="0 0 13 13"><path d="M2.8 6.5l2.6 3.2 4.8-6.4" fill="none" stroke="#222" stroke-width="1.2"/></svg>
<div class="t" style="left:113.5px;top:1010.8px;font-size:12.00px;color:#111;letter-spacing:0.03px;">Point</div>
<div class="a" style="left:148px;top:1010px;width:13px;height:13px;background:#fff;border:1px solid #333;"></div>
<div class="t" style="left:164.4px;top:1010.8px;font-size:12.00px;color:#111;letter-spacing:0.25px;">Mid</div>
<div class="a" style="left:192px;top:1010px;width:13px;height:13px;background:#fff;border:1px solid #333;"></div>
<div class="t" style="left:208.4px;top:1010.8px;font-size:12.00px;color:#111;transform:scaleX(0.913);transform-origin:0 0;">Cen</div>
<div class="a" style="left:236px;top:1010px;width:13px;height:13px;background:#fff;border:1px solid #333;"></div>
<svg class="a" style="left:236px;top:1010px;" width="13" height="13" viewBox="0 0 13 13"><path d="M2.8 6.5l2.6 3.2 4.8-6.4" fill="none" stroke="#222" stroke-width="1.2"/></svg>
<div class="t" style="left:252.5px;top:1010.8px;font-size:12.00px;color:#111;letter-spacing:0.05px;">Int</div>
<div class="a" style="left:274px;top:1010px;width:13px;height:13px;background:#fff;border:1px solid #333;"></div>
<div class="t" style="left:289.5px;top:1010.8px;font-size:12.00px;color:#111;transform:scaleX(0.911);transform-origin:0 0;">Perp</div>
<div class="a" style="left:320px;top:1010px;width:13px;height:13px;background:#fff;border:1px solid #333;"></div>
<div class="t" style="left:336.5px;top:1010.8px;font-size:12.00px;color:#111;transform:scaleX(0.883);transform-origin:0 0;">Tan</div>
<div class="a" style="left:362px;top:1010px;width:13px;height:13px;background:#fff;border:1px solid #333;"></div>
<div class="t" style="left:378.3px;top:1010.8px;font-size:12.00px;color:#111;letter-spacing:-0.29px;">Quad</div>
<div class="a" style="left:414px;top:1010px;width:13px;height:13px;background:#fff;border:1px solid #333;"></div>
<div class="t" style="left:430.4px;top:1010.8px;font-size:12.00px;color:#111;letter-spacing:-0.07px;">Knot</div>
<div class="a" style="left:462px;top:1010px;width:13px;height:13px;background:#fff;border:1px solid #333;"></div>
<svg class="a" style="left:462px;top:1010px;" width="13" height="13" viewBox="0 0 13 13"><path d="M2.8 6.5l2.6 3.2 4.8-6.4" fill="none" stroke="#222" stroke-width="1.2"/></svg>
<div class="t" style="left:478.0px;top:1010.8px;font-size:12.00px;color:#111;letter-spacing:-0.47px;">Vertex</div>
<div class="a" style="left:520px;top:1011px;width:11px;height:11px;background:#e6e6e6;border:1px solid #cfcfcf;"></div>
<div class="t" style="left:534.4px;top:1010.8px;font-size:12.00px;color:#111;letter-spacing:-0.12px;">Project</div>
<div class="a" style="left:587px;top:1011px;width:11px;height:11px;background:#e6e6e6;border:1px solid #cfcfcf;"></div>
<div class="t" style="left:602.3px;top:1010.8px;font-size:12.00px;color:#111;letter-spacing:-0.33px;">Disable</div>
<div class="a" style="left:0px;top:1028px;width:949px;height:19px;background:#f0f0f0;"></div>
<div class="a" style="left:42px;top:1029px;width:1px;height:18px;background:#dadada;"></div>
<div class="a" style="left:121px;top:1029px;width:1px;height:18px;background:#dadada;"></div>
<div class="a" style="left:200px;top:1029px;width:1px;height:18px;background:#dadada;"></div>
<div class="a" style="left:278px;top:1029px;width:1px;height:18px;background:#dadada;"></div>
<div class="a" style="left:357px;top:1029px;width:1px;height:18px;background:#dadada;"></div>
<div class="a" style="left:508px;top:1029px;width:1px;height:18px;background:#dadada;"></div>
<div class="a" style="left:566px;top:1029px;width:1px;height:18px;background:#dadada;"></div>
<div class="a" style="left:605px;top:1029px;width:1px;height:18px;background:#dadada;"></div>
<div class="a" style="left:648px;top:1029px;width:1px;height:18px;background:#dadada;"></div>
<div class="a" style="left:690px;top:1029px;width:1px;height:18px;background:#dadada;"></div>
<div class="a" style="left:756px;top:1029px;width:1px;height:18px;background:#dadada;"></div>
<div class="a" style="left:808px;top:1029px;width:1px;height:18px;background:#dadada;"></div>
<div class="a" style="left:891px;top:1029px;width:1px;height:18px;background:#dadada;"></div>
<div class="a" style="left:926px;top:1029px;width:1px;height:18px;background:#dadada;"></div>
<div class="t" style="left:0.5px;top:1031.5px;font-size:12.00px;color:#111;letter-spacing:-0.48px;">CPlane</div>
<div class="t" style="left:61.2px;top:1031.5px;font-size:12.00px;color:#111;letter-spacing:-0.42px;">x -65.91</div>
<div class="t" style="left:142.2px;top:1031.5px;font-size:12.00px;color:#111;letter-spacing:-0.51px;">y 52.88</div>
<div class="t" style="left:225.8px;top:1031.5px;font-size:12.00px;color:#111;transform:scaleX(0.853);transform-origin:0 0;">z 0.00</div>
<div class="t" style="left:300.8px;top:1031.5px;font-size:12.00px;color:#111;letter-spacing:-0.25px;">Meters</div>
<div class="a" style="left:362px;top:1032px;width:13px;height:13px;background:#000;"></div>
<div class="t" style="left:377.5px;top:1031.5px;font-size:12.00px;color:#111;letter-spacing:-0.11px;">Default</div>
<div class="t" style="left:511.7px;top:1031.5px;font-size:12.00px;color:#111;letter-spacing:-0.48px;">Grid Snap</div>
<div class="t" style="left:570.5px;top:1031.5px;font-size:12.00px;color:#111;letter-spacing:-0.02px;">Ortho</div>
<div class="t" style="left:610.2px;top:1031.5px;font-size:12.00px;color:#111;letter-spacing:-0.32px;">Planar</div>
<div class="t" style="left:652.4px;top:1031.5px;font-size:12.00px;color:#000;transform:scaleX(0.892);transform-origin:0 0;font-weight:bold;">Osnap</div>
<div class="t" style="left:694.2px;top:1031.5px;font-size:12.00px;color:#111;letter-spacing:-0.40px;">SmartTrack</div>
<div class="t" style="left:760.3px;top:1031.5px;font-size:12.00px;color:#111;letter-spacing:-0.10px;">Gumball</div>
<div class="t" style="left:811.6px;top:1031.5px;font-size:12.00px;color:#111;letter-spacing:-0.16px;">Record History</div>
<div class="t" style="left:896.2px;top:1031.5px;font-size:12.00px;color:#111;letter-spacing:-0.10px;">Filter</div>
<div class="a" style="left:928.6px;top:1030px;width:6px;height:16px;overflow:hidden"><div class="t" style="left:0;top:1.5px;font-size:12px;color:#111">M</div></div>
<svg class="a" style="left:0px;top:0px;" width="949" height="104" viewBox="0 0 949 104"><defs><linearGradient id="pg" x1="0" y1="0" x2="1" y2="1"><stop offset="0" stop-color="#fff"/><stop offset="1" stop-color="#d6d6d6"/></linearGradient><radialGradient id="sg" cx="0.38" cy="0.3" r="0.7"><stop offset="0" stop-color="#fff"/><stop offset="0.5" stop-color="#a8a8a8"/><stop offset="1" stop-color="#3a3a3a"/></radialGradient><radialGradient id="sb" cx="0.38" cy="0.28" r="0.75"><stop offset="0" stop-color="#9fc4ff"/><stop offset="0.35" stop-color="#1f55d8"/><stop offset="1" stop-color="#06154f"/></radialGradient><radialGradient id="hb" cx="0.4" cy="0.3" r="0.75"><stop offset="0" stop-color="#8fb0ff"/><stop offset="0.5" stop-color="#2a52d0"/><stop offset="1" stop-color="#10257a"/></radialGradient><radialGradient id="gh" cx="0.4" cy="0.35" r="0.7"><stop offset="0" stop-color="#b9e0a0"/><stop offset="1" stop-color="#4c8a3c"/></radialGradient><linearGradient id="fy" x1="0" y1="0" x2="0" y2="1"><stop offset="0" stop-color="#ffe680"/><stop offset="1" stop-color="#f2b418"/></linearGradient></defs><g transform="translate(5.6 73)"><path d="M5 3h9.500l4.500 4.500v13.500h-14z" fill="url(#pg)" stroke="#111" stroke-width="1.200"/><path d="M14.500 3v4.500h4.500" fill="#fff" stroke="#111" stroke-width="1"/></g><g transform="translate(34.1 73)"><path d="M2.500 20.500v-15.500h6l2 2.500h8v3" fill="#f7d04a" stroke="#3a2c00" stroke-width="1.200"/><path d="M2.500 20.500l4.500-10h16l-4.500 10z" fill="url(#fy)" stroke="#3a2c00" stroke-width="1.200"/></g><g transform="translate(61.8 73)"><path d="M2.500 2.500h19v19h-16.500l-2.500-2.500z" fill="#a89c4a" stroke="#2e2a10" stroke-width="1.200"/><rect x="6" y="3" width="12" height="8.500" fill="#e8e8e8" stroke="#555" stroke-width="0.800"/><rect x="7" y="14" width="10.500" height="7" fill="#6f6a48" stroke="#2e2a10" stroke-width="0.800"/><rect x="9" y="15.500" width="3.500" height="4.500" fill="#c9c4a0"/><path d="M24 19.5v5.500h-5.500z" fill="#6e6e6e"/></g><g transform="translate(89.5 73)"><path d="M7 10l2-7.500h9.500l-2 7.500z" fill="#fff" stroke="#222" stroke-width="1.100"/><path d="M11 6.500l3-1.500v2.500z" fill="#555"/><path d="M2 11.500l3.500-2h15l1.500 2v6l-3 3.500h-15.500l-1.500-2z" fill="#d8d8d8" stroke="#111" stroke-width="1.200"/><path d="M2 14.500h17l3-3M2 17h17l3-3M19 14.500v6" fill="none" stroke="#111" stroke-width="1.100"/><path d="M19 15v5.500l3-3.500v-5z" fill="#333"/></g><g transform="translate(119.7 73)"><path d="M4.500 4.500h10.500l2.500 0v13l-4 4h-9z" fill="url(#pg)" stroke="#111" stroke-width="1.300"/><path d="M13.500 21.500v-4h4" fill="#fff" stroke="#111" stroke-width="1"/><path d="M10 6l6-4.500 0 2h6v-2.500h1.500v8h-1.500v-2.500h-6l0 2z" fill="#9a9a9a" stroke="#333" stroke-width="0.700"/><path d="M21.500 1v8" stroke="#111" stroke-width="1.600"/></g><g transform="translate(145.7 73)"><path d="M6.500 3l9 13.500M17.500 3l-9 13.500" stroke="#333" stroke-width="1.200" fill="none"/><ellipse cx="7" cy="19" rx="2.300" ry="3" fill="none" stroke="#8a8f94" stroke-width="1.100" transform="rotate(25 7 19)"/><ellipse cx="17" cy="19" rx="2.300" ry="3" fill="none" stroke="#8a8f94" stroke-width="1.100" transform="rotate(-25 17 19)"/></g><g transform="translate(174.2 73)"><path d="M4.500 2.500h7l3.500 3.500v10.500h-10.500z" fill="url(#pg)" stroke="#111" stroke-width="1.200"/><path d="M9.500 7.500h7l3.500 3.500v10.500h-10.500z" fill="url(#pg)" stroke="#111" stroke-width="1.200"/><path d="M16.500 7.500v3.500h3.500" fill="none" stroke="#111" stroke-width="1"/></g><g transform="translate(201.9 73)"><rect x="5" y="4" width="14" height="17.500" rx="1.800" fill="#f6e488" stroke="#2a2500" stroke-width="1.300"/><path d="M8.500 4v-1.500h7v1.500q0 1.800-1.800 1.800h-3.400q-1.800 0-1.800-1.800z" fill="#444" stroke="#111" stroke-width="0.800"/></g><g transform="translate(229.6 73)"><path d="M6 12.500C9.500 6 18 5.500 22 12l-2.200 1.500C16.500 9 11.500 9.500 9 14z" fill="#111"/><path d="M2 13.500l7.500-4.500 0.500 9.500z" fill="#111"/><path d="M24 19.5v5.500h-5.500z" fill="#6e6e6e"/></g><g transform="translate(256.5 73)"><path d="M7 13.500l-3-3.500q-1-1.200 0-1.900q1-0.600 2 0.500l2 2.200v-6.300q0-1.300 1.100-1.300t1.100 1.300v-1.500q0-1.300 1.100-1.300t1.100 1.300v1.300q0-1.200 1.100-1.200t1.100 1.200v2q0-1.100 1-1.100t1 1.100v7.500q0 2.500-1.500 4l-0.500 4h-6l-0.500-3.500q-1.500-1.500-2.300-3.300z" fill="#fff" stroke="#222" stroke-width="1.100"/><path d="M10.200 5v6M12.400 4.500v6.500M14.600 5.500v5.500" stroke="#222" stroke-width="0.900"/><path d="M9 17h7v5h-6.500z" fill="#e4e4e4" opacity="0.7"/></g><g transform="translate(286.7 73)"><ellipse cx="12" cy="12" rx="10" ry="3.600" fill="none" stroke="#b9b9b9" stroke-width="1.300" transform="rotate(-10 12 12)"/><ellipse cx="12" cy="12" rx="3.600" ry="10" fill="none" stroke="#b9b9b9" stroke-width="1.300"/><path d="M12 7v9M7.500 13.500l8-2" stroke="#111" stroke-width="1.200"/><path d="M12 5.500l2 3h-4zM5.500 14l3-2.300 0.700 3.300zM17.500 10.500l-2.800 2.300-0.600-3.200zM12 17.500l-1.800-2.500h3.600z" fill="#111"/></g><g transform="translate(314.8 73)"><circle cx="14.5" cy="9" r="6" fill="#f4f4f4" stroke="#222" stroke-width="1.2"/><path d="M10.4 13.3L3.5 20.5" stroke="#111" stroke-width="2.2" stroke-linecap="round"/><path d="M11.500 7.500h6M14.500 4.800v5.400M11.500 12.300h6" stroke="#111" stroke-width="1.100"/></g><g transform="translate(342.5 73)"><rect x="7.500" y="2.500" width="15" height="12" fill="none" stroke="#111" stroke-width="1.100" stroke-dasharray="2 1.600"/><circle cx="12.5" cy="11" r="5.4" fill="#f4f4f4" stroke="#222" stroke-width="1.2"/><path d="M8.8 14.9L3.5 20.5" stroke="#111" stroke-width="2.2" stroke-linecap="round"/><path d="M10.500 13.500h1.200M13.500 13.500h1.200" stroke="#333" stroke-width="1"/></g><g transform="translate(370.0 73)"><path d="M2 2h4.500l-4.500 4.500zM22 2v4.500l-4.500-4.500zM2 22v-4.500l4.500 4.500zM22 22h-4.500l4.500-4.500z" fill="#111"/><circle cx="13.5" cy="10" r="5.8" fill="#f4f4f4" stroke="#222" stroke-width="1.2"/><path d="M9.5 14.2L5 19" stroke="#111" stroke-width="2.2" stroke-linecap="round"/></g><g transform="translate(398.7 73)"><circle cx="14.5" cy="9.5" r="6.5" fill="#f4f4f4" stroke="#222" stroke-width="1.2"/><path d="M9.9 14.1L3.5 20.5" stroke="#111" stroke-width="2.2" stroke-linecap="round"/><circle cx="16.500" cy="7.500" r="2.900" fill="#f2e21a" stroke="#8a7a00" stroke-width="0.800"/><circle cx="12.500" cy="11.500" r="2.900" fill="#f2e21a" stroke="#8a7a00" stroke-width="0.800"/></g><g transform="translate(426.4 73)"><path d="M7 7C10 2 17 2 21.500 6.500l-1.800 1.500C16 5 11.500 5 9.500 8.500z" fill="#333"/><path d="M3.500 8l6-3.500 0.500 7.500z" fill="#111"/><circle cx="14.5" cy="15" r="4.8" fill="#f4f4f4" stroke="#222" stroke-width="1.2"/><path d="M11.0 18.3L6 23" stroke="#111" stroke-width="2.2" stroke-linecap="round"/><path d="M24 19.5v5.500h-5.500z" fill="#6e6e6e"/></g><g transform="translate(453.7 73)"><rect x="2" y="2.500" width="20" height="18" fill="#c4c4c4" stroke="#111" stroke-width="1.500"/><path d="M12 2.500v18M2 11.500h20" stroke="#111" stroke-width="1.500"/><path d="M24 19.5v5.500h-5.500z" fill="#6e6e6e"/></g><g transform="translate(481.7 73)"><path d="M2.500 15q-1-4 3-4.500l3.500-0.500 2.500-3.500h7.500l1.500 4h2.500v4.500z" fill="#e11b1b"/><path d="M9.800 10l1.800-2.700h3v2.700zM15.500 7.300h2.800l1 2.700h-3.800z" fill="#ffd0d0"/><circle cx="7" cy="15.500" r="2.200" fill="#222"/><circle cx="18.500" cy="15.500" r="2.200" fill="#222"/><circle cx="7" cy="15.500" r="0.900" fill="#e0c040"/><circle cx="18.500" cy="15.500" r="0.900" fill="#e0c040"/><path d="M24 19.5v5.500h-5.500z" fill="#6e6e6e"/></g><g transform="translate(510.2 73)"><path d="M6 6.500l16 3.500-4 11-16-5zM10 7.400l-4 10M14 8.300l-4 10.300M18 9.200l-4 10.600M4.600 10l15.800 4.300M3.400 13l15.600 4.600" fill="none" stroke="#c8c8c8" stroke-width="1"/><path d="M12.500 12.500l8.500 2M12.500 12.500l-3 7" stroke="#d05050" stroke-width="1.200"/><rect x="10" y="10.500" width="3.600" height="3.600" fill="#fff" stroke="#111" stroke-width="1.100"/><path d="M24 19.5v5.500h-5.500z" fill="#6e6e6e"/></g><g transform="translate(538.0 73)"><circle cx="11" cy="12" r="8.500" fill="none" stroke="#b5b5b5" stroke-width="1.400"/><path d="M11 12h9.500" stroke="#222" stroke-width="1.300"/><circle cx="11" cy="12" r="1.800" fill="#fff" stroke="#222" stroke-width="1.100"/><path d="M24 19.5v5.500h-5.500z" fill="#6e6e6e"/></g><g transform="translate(566.5 73)"><path d="M19 1.500h3.500v3.500M1.500 19v3.500h3.500" fill="none" stroke="#111" stroke-width="1.300"/><circle cx="7.500" cy="8" r="3.300" fill="#f7d820" stroke="#9a8000" stroke-width="0.800"/><rect x="13" y="8" width="6.500" height="6.500" fill="#f7d820" stroke="#9a8000" stroke-width="0.800"/><path d="M10.500 14.500l3 5.500h-6z" fill="#fff" stroke="#c09a50" stroke-width="1.100"/><path d="M24 19.5v5.500h-5.500z" fill="#6e6e6e"/></g><g transform="translate(594.0 73)"><path d="M12 2a6.800 6.800 0 0 1 4 12.300v3.200h-8v-3.200a6.800 6.800 0 0 1 4-12.300z" fill="url(#sg)" stroke="#777" stroke-width="0.800"/><path d="M8.500 17.500h7v2.500l-1.500 2h-4l-1.500-2z" fill="#555"/><path d="M24 19.5v5.500h-5.500z" fill="#6e6e6e"/></g><g transform="translate(622.3 73)"><path d="M8 10.500v-3.500a4 4 0 0 1 8 0v3.500" fill="none" stroke="#222" stroke-width="2"/><rect x="5.500" y="10.500" width="13" height="10" rx="1.200" fill="#c8c8c8" stroke="#222" stroke-width="1.300"/><path d="M7 13.500h10M7 16h10M7 18.500h10" stroke="#9a9a9a" stroke-width="0.900"/><path d="M24 19.5v5.500h-5.500z" fill="#6e6e6e"/></g><g transform="translate(650.0 73)"><path d="M2.500 3l10 3 9-2.500-1 9.500-9 9.500-8-8.500z" fill="#e6431a" stroke="#401000" stroke-width="0.900"/><path d="M3 11l9.500 4.500 8.500-4-0.300 3-8.700 8-8.400-8.500z" fill="#fff"/><path d="M3.300 14.500l9 6 8.500-6.500-0.500 2.500-8.300 6.500-8-6z" fill="#2a3fa8"/><path d="M24 19.5v5.500h-5.500z" fill="#6e6e6e"/></g><g transform="translate(677.6 73)"><circle cx="12" cy="12" r="7.700" fill="none" stroke-width="4.400" stroke="#e00"/><path d="M12 4.300A7.700 7.700 0 0 1 18.670 8.150" fill="none" stroke="#f0e010" stroke-width="4.400"/><path d="M18.670 8.150A7.700 7.700 0 0 1 18.670 15.850" fill="none" stroke="#30c030" stroke-width="4.400"/><path d="M18.670 15.850A7.700 7.700 0 0 1 12 19.700" fill="none" stroke="#10b0c0" stroke-width="4.400"/><path d="M12 19.700A7.700 7.700 0 0 1 5.330 15.850" fill="none" stroke="#2030d0" stroke-width="4.400"/><path d="M5.330 15.850A7.700 7.700 0 0 1 5.330 8.150" fill="none" stroke="#a010c0" stroke-width="4.400"/><path d="M5.330 8.150A7.700 7.700 0 0 1 12 4.300" fill="none" stroke="#e8202a" stroke-width="4.400"/><path d="M24 19.5v5.500h-5.500z" fill="#6e6e6e"/></g><g transform="translate(706.0 73)"><circle cx="12" cy="12" r="9.300" fill="url(#sg)"/><path d="M12 2.700v18.600M2.700 12.500q9.300 3 18.600 0" fill="none" stroke="#333" stroke-width="1"/></g><g transform="translate(734.0 73)"><rect x="1" y="1" width="22" height="22" fill="#e4e4e4"/><path d="M1 5h22M1 9h22M1 13h22M1 17h22M1 21h22M5 1v22M9 1v22M13 1v22M17 1v22M21 1v22" stroke="#cfcfcf" stroke-width="0.700"/><circle cx="12" cy="12" r="9.300" fill="url(#sg)"/><path d="M12 2.700v18.600M2.700 12.500q9.300 3 18.600 0" fill="none" stroke="#333" stroke-width="1"/><path d="M24 19.5v5.500h-5.500z" fill="#6e6e6e"/></g><g transform="translate(762.0 73)"><ellipse cx="13" cy="21" rx="9" ry="2.500" fill="#bbb"/><circle cx="12" cy="12" r="9.500" fill="url(#sb)"/><path d="M24 19.5v5.500h-5.500z" fill="#6e6e6e"/></g><g transform="translate(795.0 73)"><path d="M5 4.500l13.500-3-4.500 13z" fill="#f5a020" stroke="#7a4a00" stroke-width="0.900"/><path d="M5 4.500q1 6 9 10l-1-3q-5-2-8-7z" fill="#fbe4c0" stroke="#7a4a00" stroke-width="0.600"/><path d="M24 19.5v5.500h-5.500z" fill="#6e6e6e"/></g><g transform="translate(817.7 73)"><path d="M10 1.500h4l0.500 3 2.500 1 2.500-1.800 2.800 2.800-1.800 2.500 1 2.500 3 0.500v4l-3 0.500-1 2.500 1.800 2.500-2.800 2.800-2.500-1.800-2.500 1-0.500 3h-4l-0.500-3-2.500-1-2.500 1.800-2.800-2.800 1.800-2.500-1-2.500-3-0.500v-4l3-0.500 1-2.500-1.800-2.500 2.800-2.800 2.500 1.800 2.500-1z" fill="#f2d84a" stroke="#3a2c00" stroke-width="1.500" transform="translate(2 1.500) scale(0.820)"/><rect x="9.500" y="6.500" width="5" height="8.500" rx="1.500" fill="#bdbdbd" stroke="#444" stroke-width="0.900"/><path d="M24 19.5v5.500h-5.500z" fill="#6e6e6e"/></g><g transform="translate(846.3 73)"><path d="M2.500 2.500h7M2.500 11.500h7M4 3v8M9.500 11.500v8.500M9.500 20h10M19.500 13v9M12 20h6" fill="none" stroke="#111" stroke-width="1.200"/><rect x="8" y="1" width="3" height="3" fill="#fff" stroke="#111"/><rect x="8" y="10" width="3" height="3" fill="#fff" stroke="#111"/><rect x="18" y="10.500" width="3" height="3" fill="#fff" stroke="#111"/><path d="M4 3.500l-1.500 2h3zM4 10.500l-1.500-2h3zM11 20l2-1.500v3zM18.500 20l-2-1.500v3z" fill="#111"/><path d="M24 19.5v5.500h-5.500z" fill="#6e6e6e"/></g><g transform="translate(874.0 73)"><circle cx="12" cy="12" r="11" fill="url(#gh)" stroke="#5a6a55" stroke-width="1.300"/><path d="M4 18q3-6 8-5l5-8M12 13l8-4M8.500 14.500l-3 6M11 14l1 7" fill="none" stroke="#3d5a38" stroke-width="1.300"/><path d="M5 17q2-4 6-4l2 2q-1 4-6 5z" fill="#3d5a38"/></g><g transform="translate(901.6 73)"><circle cx="12" cy="12" r="10.500" fill="url(#hb)"/><path d="M8 9q0-4.500 4.200-4.500t4.200 3.800q0 2.300-2 3.500t-1.700 3h-2.500q-0.300-2.500 1.700-4t2-2.600q0-1.500-1.700-1.500t-1.800 2.300z" fill="#fff"/><circle cx="11.500" cy="18.500" r="1.600" fill="#fff"/><path d="M24 19.5v5.500h-5.500z" fill="#6e6e6e"/></g></svg>
<div class="t" style="left:930.5px;top:77.5px;font-size:13.00px;color:#111;font-weight:bold;">»</div>
<svg class="a" style="left:0px;top:0px;" width="60" height="700" viewBox="0 0 60 700"><g transform="translate(0 171.6)"><path d="M7.500 5.500v11.500l2.700-2.300 2.300 4.600 1.800-0.900-2.300-4.600h3.600z" fill="#fff" stroke="#111" stroke-width="1.100"/></g><g transform="translate(28 171.6)"><circle cx="11.5" cy="11.5" r="1.8" fill="#fff" stroke="#111" stroke-width="1"/><path d="M24 18.5v5.500h-5.500z" fill="#6e6e6e"/></g><g transform="translate(0 199.7)"><path d="M4 17l4.500-12 8 9" fill="none" stroke="#222" stroke-width="1.100"/><circle cx="4" cy="17" r="1.5" fill="#fff" stroke="#111" stroke-width="1"/><circle cx="8.5" cy="5" r="1.5" fill="#fff" stroke="#111" stroke-width="1"/><circle cx="16.5" cy="14" r="1.5" fill="#fff" stroke="#111" stroke-width="1"/><path d="M24 18.5v5.500h-5.500z" fill="#6e6e6e"/></g><g transform="translate(28 199.7)"><path d="M5 6h6q9 0 9 6t-9 6h-6" fill="none" stroke="#222" stroke-width="1.100"/><rect x="2.5" y="4.5" width="3" height="3" fill="#fff" stroke="#111" stroke-width="1"/><rect x="2.5" y="16.0" width="3" height="3" fill="#fff" stroke="#111" stroke-width="1"/><rect x="16.0" y="2.0" width="3" height="3" fill="#fff" stroke="#111" stroke-width="1"/><rect x="18.0" y="18.5" width="3" height="3" fill="#fff" stroke="#111" stroke-width="1"/><path d="M24 18.5v5.500h-5.500z" fill="#6e6e6e"/></g><g transform="translate(0 227.9)"><circle cx="11" cy="12" r="9" fill="none" stroke="#222" stroke-width="1.100"/><path d="M11 12l5-5" stroke="#222" stroke-width="1.200"/><circle cx="11" cy="12" r="1.5" fill="#fff" stroke="#111" stroke-width="1"/><circle cx="16.5" cy="6.5" r="1.5" fill="#fff" stroke="#111" stroke-width="1"/><path d="M24 18.5v5.500h-5.500z" fill="#6e6e6e"/></g><g transform="translate(28 227.9)"><ellipse cx="12" cy="13" rx="10" ry="6.500" fill="none" stroke="#222" stroke-width="1.100"/><path d="M12 6.500v6.500h9" stroke="#222" stroke-width="1" fill="none"/><rect x="10.5" y="4.5" width="3" height="3" fill="#fff" stroke="#111" stroke-width="1"/><rect x="10.5" y="11.5" width="3" height="3" fill="#fff" stroke="#111" stroke-width="1"/><rect x="20.0" y="11.5" width="3" height="3" fill="#fff" stroke="#111" stroke-width="1"/><path d="M24 18.5v5.500h-5.500z" fill="#6e6e6e"/></g><g transform="translate(0 256.0)"><path d="M5 3.500q13 1 15.500 11l-15.500 7.500z" fill="none" stroke="#222" stroke-width="1.100"/><circle cx="5" cy="3.5" r="1.5" fill="#fff" stroke="#111" stroke-width="1"/><circle cx="20.5" cy="14.5" r="1.5" fill="#fff" stroke="#111" stroke-width="1"/><circle cx="5" cy="22" r="1.5" fill="#fff" stroke="#111" stroke-width="1"/><path d="M24 18.5v5.500h-5.500z" fill="#6e6e6e"/></g><g transform="translate(28 256.0)"><rect x="3.500" y="7" width="17" height="11" fill="none" stroke="#222" stroke-width="1.200"/><circle cx="20.5" cy="7" r="1.5" fill="#fff" stroke="#111" stroke-width="1"/><circle cx="3.5" cy="18" r="1.5" fill="#fff" stroke="#111" stroke-width="1"/><path d="M24 18.5v5.500h-5.500z" fill="#6e6e6e"/></g><g transform="translate(0 284.1)"><path d="M7 3.500h9.500l5 8-5 8h-9.500l-5-8z" fill="none" stroke="#222" stroke-width="1.100"/><path d="M11 11.500h10" stroke="#222"/><circle cx="11" cy="11.5" r="1.5" fill="#fff" stroke="#111" stroke-width="1"/><circle cx="20.5" cy="11.5" r="1.5" fill="#fff" stroke="#111" stroke-width="1"/><path d="M24 18.5v5.500h-5.500z" fill="#6e6e6e"/></g><g transform="translate(28 284.1)"><path d="M4 4h6q10 0 10 10v6" fill="none" stroke="#111" stroke-width="1.800"/><path d="M13 4h7v7" fill="none" stroke="#bbb" stroke-width="1"/><rect x="2.3" y="2.3" width="3.4" height="3.4" fill="#fff" stroke="#111" stroke-width="1"/><rect x="18.3" y="18.8" width="3.4" height="3.4" fill="#fff" stroke="#111" stroke-width="1"/><path d="M24 18.5v5.500h-5.500z" fill="#6e6e6e"/></g><g transform="translate(0 312.2)"><path d="M8 4.500l12-2-3 14-11 4-3-6z" fill="#6f86e0" stroke="#2a3a9a" stroke-width="1"/><path d="M12 3.800l-3 15.500M4.500 11l14-3" stroke="#b9c6f5" stroke-width="1"/><rect x="6.3" y="2.8" width="3.4" height="3.4" fill="#fff" stroke="#111" stroke-width="1"/><rect x="18.3" y="0.8" width="3.4" height="3.4" fill="#fff" stroke="#111" stroke-width="1"/><rect x="1.3" y="12.8" width="3.4" height="3.4" fill="#fff" stroke="#111" stroke-width="1"/><rect x="13.3" y="19.3" width="3.4" height="3.4" fill="#fff" stroke="#111" stroke-width="1"/><path d="M24 18.5v5.500h-5.500z" fill="#6e6e6e"/></g><g transform="translate(28 312.2)"><path d="M5 6.500l7-4q9 3 8.500 12l-6 5.500z" fill="#6f86e0" stroke="#222" stroke-width="1"/><path d="M5 6.500l7-4 4 4.500-6 4z" fill="#fff" stroke="#222" stroke-width="1"/><path d="M14.500 20v-7.500l6-4" fill="none" stroke="#222"/><path d="M14.500 12.500v7.500l6-5.500v-6z" fill="#fff" stroke="#222" stroke-width="0.900"/><path d="M24 18.5v5.500h-5.500z" fill="#6e6e6e"/></g><g transform="translate(0 340.4)"><path d="M3 7l11-3.500 7 3v11l-8 4-10-3.500z" fill="#6f86e0" stroke="#2a3a9a" stroke-width="0.800"/><path d="M3 7l10 3 8-3.500-7-3z" fill="#b9c6f5"/><path d="M13 10v11.500l8-4v-11z" fill="#3f55c0"/><path d="M24 18.5v5.500h-5.500z" fill="#6e6e6e"/></g><g transform="translate(28 340.4)"><circle cx="14.500" cy="8" r="6.800" fill="#6f86e0" stroke="#2a3a9a"/><circle cx="8.500" cy="15.500" r="7.300" fill="#6f86e0" stroke="#2a3a9a"/><path d="M8.500 8.200v14.600M1.200 15.500q7 3 14.600 0M14.500 1.200v7M10 11q5 1.500 11-1" fill="none" stroke="#b9c6f5" stroke-width="0.900"/><path d="M24 18.5v5.500h-5.500z" fill="#6e6e6e"/></g><g transform="translate(0 368.5)"><ellipse cx="11" cy="4.500" rx="5.500" ry="2.300" fill="#fff" stroke="#333" stroke-width="1"/><path d="M1.500 9.500q10 4 20.500 0v10q-10 4-20.500 0z" fill="#6f86e0" stroke="#2a3a9a" stroke-width="0.800"/><ellipse cx="11.500" cy="17" rx="6" ry="2.400" fill="none" stroke="#e8ecff" stroke-width="2"/><path d="M24 18.5v5.500h-5.500z" fill="#6e6e6e"/></g><g transform="translate(28 368.5)"><path d="M8 3q4 3 8 1t6 1l-4 13q-4-2-7 0t-9 0z" fill="#6f86e0" stroke="#2a3a9a" stroke-width="0.900"/><path d="M12 4.500l-5 14M17.500 4l-4.500 13.500M5 11q5 2 8 0t7 0" fill="none" stroke="#2a3a9a" stroke-width="0.800"/><path d="M24 18.5v5.500h-5.500z" fill="#6e6e6e"/></g><g transform="translate(0 396.6)"><path d="M3 5h4.500q-1.500-3.500 1.500-3.500t1.500 3.500h4.500v4.500q3.500-1.500 3.500 1.500t-3.500 1.500v4.500h-12z" fill="#f2a81a" stroke="#5a3a00" stroke-width="0.900"/><path d="M10 13.500h3.500q-1-3 1.500-3t1.500 3h4.500v3.500q-2.500-1-2.500 1.500t2.500 1.500v3h-11z" fill="#fff" stroke="#333" stroke-width="0.900"/></g><g transform="translate(28 396.6)"><path d="M2 23l2-18 6 8 4-11 2 10 7-6-4 10 4 2-7 1 2 4z" fill="#f5a21a"/><path d="M5 23l1.500-12 4.500 6 3-8 1.500 7 5-3.500-3 7z" fill="#ffd060"/></g><g transform="translate(0 424.8)"><path d="M13 1.500h7l-4 10.500h-3z" fill="#2a3aa8"/><rect x="1.500" y="10" width="12" height="6" fill="#fff" stroke="#111" stroke-width="1.200"/><rect x="13" y="13" width="9" height="5.500" fill="#fff" stroke="#333" stroke-width="1" transform="rotate(45 14 14)"/></g><g transform="translate(28 424.8)"><path d="M13 1.500h7l-4 10.500h-3z" fill="#2a3aa8"/><rect x="1.500" y="11" width="12" height="5.500" fill="#fff" stroke="#111" stroke-width="1.200"/><rect x="14.500" y="11" width="8" height="5.500" fill="#fff" stroke="#111" stroke-width="1.200"/></g><g transform="translate(0 452.9)"><circle cx="12" cy="8" r="5.800" fill="#6f86e0" stroke="#111" stroke-width="1.100"/><circle cx="8" cy="15" r="5.800" fill="#fff" stroke="#111" stroke-width="1.100"/><circle cx="16" cy="15" r="5.800" fill="#1a237e" stroke="#111" stroke-width="1.100"/><circle cx="12" cy="12.500" r="2.500" fill="#111"/><path d="M24 18.5v5.500h-5.500z" fill="#6e6e6e"/></g><g transform="translate(28 452.9)"><circle cx="12" cy="5.500" r="4" fill="#6f86e0" stroke="#2a3a9a" stroke-width="0.800"/><circle cx="6.500" cy="16" r="4" fill="#fff" stroke="#111" stroke-width="1"/><circle cx="17.500" cy="16" r="4" fill="#1a237e"/></g><g transform="translate(0 481.0)"><path d="M4 6q11 1 13 13" fill="none" stroke="#111" stroke-width="1.300"/><path d="M2 3.500l3 3M19 22l-2-3.500" stroke="#111" stroke-width="1"/><rect x="3.5" y="4.5" width="3" height="3" fill="#fff" stroke="#111" stroke-width="1"/><rect x="15.5" y="16.0" width="3" height="3" fill="#fff" stroke="#111" stroke-width="1"/></g><g transform="translate(28 481.0)"><path d="M3 7q14 0 17 15" fill="none" stroke="#111" stroke-width="2"/><path d="M3 3.500h7l9 8 2 7" fill="none" stroke="#111" stroke-width="1" stroke-dasharray="1.500 1.500"/><rect x="9.0" y="2.0" width="3" height="3" fill="#fff" stroke="#111" stroke-width="1"/><rect x="19.0" y="11.0" width="3" height="3" fill="#fff" stroke="#111" stroke-width="1"/><path d="M24 18.5v5.500h-5.500z" fill="#6e6e6e"/></g><g transform="translate(0 509.2)"><path d="M3 3h18v5h-2.500l-1-2h-3v13l2.500 1v2h-10v-2l2.500-1v-13h-3l-1 2h-2.500z" fill="#6f86e0" stroke="#2a3a9a" stroke-width="1"/><path d="M3 3h18v2h-18z" fill="#b9c6f5"/></g><g transform="translate(28 509.2)"><rect x="13.500" y="2" width="8" height="8" fill="#6f86e0" stroke="#111" stroke-width="1.100"/><rect x="2.500" y="14" width="8" height="8" fill="#fff" stroke="#111" stroke-width="1.100"/><path d="M8 16l6-6M14 10h-3M14 10v3" stroke="#111" stroke-width="1.100" fill="none"/><path d="M24 18.5v5.500h-5.500z" fill="#6e6e6e"/></g><g transform="translate(0 537.3)"><rect x="3" y="2" width="6" height="6" fill="#6f86e0" stroke="#111"/><rect x="11" y="9" width="6" height="6" fill="#6f86e0" stroke="#111"/><rect x="16" y="4.500" width="6" height="6" fill="#6f86e0" stroke="#111"/><rect x="3" y="13.500" width="6.500" height="6.500" fill="#fff" stroke="#111"/><rect x="15" y="16" width="6.500" height="6.500" fill="#6f86e0" stroke="#111"/></g><g transform="translate(28 537.3)"><rect x="2.500" y="3" width="6" height="14" fill="#fff" stroke="#111" stroke-width="1.200"/><rect x="11" y="12" width="12" height="5" fill="#6f86e0" stroke="#2a3a9a" transform="rotate(-40 15 15)"/><path d="M9 6h6v4M13 8l2 2.500 2-2.500" fill="none" stroke="#111" stroke-width="1"/></g><g transform="translate(0 565.4)"><path d="M2.500 8q2-6 10-5.500l8 3v11l-8 5-10-4z" fill="#6f86e0" stroke="#2a3a9a" stroke-width="0.900"/><path d="M12.500 11v10.500l8-5v-10z" fill="#3f55c0"/><path d="M6 14l6 1.500 4-2.500v8l-4 2.500-6-2.500z" fill="#fff" stroke="#333" stroke-width="0.800"/><path d="M24 18.5v5.500h-5.500z" fill="#6e6e6e"/></g><g transform="translate(28 565.4)"><path d="M2 20l6-5h14l-5 5z" fill="#6f86e0" stroke="#2a3a9a" stroke-width="0.900"/><path d="M4 13.500h17" stroke="#111" stroke-width="1.100" stroke-dasharray="3 1.500"/><path d="M8 13v-8M12.500 13v-8M17 13v-8" stroke="#fff" stroke-width="2"/><path d="M8 2l-2 4h4zM12.500 2l-2 4h4zM17 2l-2 4h4z" fill="#fff"/><path d="M24 18.5v5.500h-5.500z" fill="#6e6e6e"/></g><g transform="translate(0 593.5)"><rect x="2.5" y="2" width="4.500" height="4.500" fill="#6f86e0" stroke="#111" stroke-width="1"/><rect x="10" y="2" width="4.500" height="4.500" fill="#6f86e0" stroke="#111" stroke-width="1"/><rect x="17.5" y="2" width="4.500" height="4.500" fill="#6f86e0" stroke="#111" stroke-width="1"/><rect x="2.5" y="9.5" width="4.500" height="4.500" fill="#6f86e0" stroke="#111" stroke-width="1"/><rect x="10" y="9.5" width="4.500" height="4.500" fill="#6f86e0" stroke="#111" stroke-width="1"/><rect x="17.5" y="9.5" width="4.500" height="4.500" fill="#6f86e0" stroke="#111" stroke-width="1"/><rect x="2.5" y="17" width="4.500" height="4.500" fill="#fff" stroke="#111" stroke-width="1"/><rect x="10" y="17" width="4.500" height="4.500" fill="#6f86e0" stroke="#111" stroke-width="1"/><rect x="17.5" y="17" width="4.500" height="4.500" fill="#6f86e0" stroke="#111" stroke-width="1"/><path d="M24 18.5v5.500h-5.500z" fill="#6e6e6e"/></g><g transform="translate(28 593.5)"><path d="M12 1v22" stroke="#d01818" stroke-width="1.600"/><rect x="7.500" y="3" width="9" height="5" fill="#fff" stroke="#a01010" stroke-width="1.100"/><rect x="8.500" y="10" width="7" height="4.500" fill="#fff" stroke="#a01010" stroke-width="1.100"/><rect x="8" y="16.500" width="8" height="5" fill="#fff" stroke="#a01010" stroke-width="1.100"/><path d="M24 18.5v5.500h-5.500z" fill="#6e6e6e"/></g><g transform="translate(0 621.7)"><path d="M3 7l4-2 3 12-4 3z" fill="#fff" stroke="#111" stroke-width="1"/><path d="M9 5l4-3 1 3-3 14z" fill="#e8e8e8" stroke="#111" stroke-width="0.900"/><path d="M14 6l7-1.500-5 15-7 2z" fill="#6f86e0" stroke="#2a3a9a" stroke-width="0.900"/><path d="M24 18.5v5.500h-5.500z" fill="#6e6e6e"/></g><g transform="translate(28 621.7)"><path d="M3 13l3-2.500 3.500 5q4-8 12-13.500-6 7-11.500 19z" fill="#111"/><path d="M24 18.5v5.500h-5.500z" fill="#6e6e6e"/></g><g transform="translate(0 649.8)"><path d="M2 9l6-3 6 2.500v8l-6 3.500-6-3z" fill="#bdbdbd" stroke="#444" stroke-width="0.900"/><path d="M2 9l6 2.500 6-3-6-2.500z" fill="#e2e2e2"/><path d="M16 6l6 13q-5 4-11 0z" fill="#a8a8a8" stroke="#444" stroke-width="0.900"/><path d="M24 18.5v5.500h-5.500z" fill="#6e6e6e"/></g><g transform="translate(28 649.8)"><path d="M12 9l10 9-9 5-11-6z" fill="#f2b040" stroke="#7a4a00" stroke-width="0.900"/><path d="M12 9l1 14 9-5z" fill="#ffd890"/><path d="M10 3l7-2v2h6v1.500h-6v2l-7-2z" fill="#555"/><path d="M11 6l4 0M9 8h4" stroke="#888" stroke-width="1"/><path d="M24 18.5v5.500h-5.500z" fill="#6e6e6e"/></g></svg>
<svg class="a" style="left:1.5px;top:0.5px;" width="949" height="400" viewBox="0 0 949 400"><defs><radialGradient id="rsb" cx="0.35" cy="0.3" r="0.75"><stop offset="0" stop-color="#a9c4ff"/><stop offset="0.4" stop-color="#2450c8"/><stop offset="1" stop-color="#0a1a60"/></radialGradient></defs><path d="M912.500 170 h14 q8 0 14 8 l6 8 v6 h-34z" fill="#e2e2e2" stroke="#d2d2d2" stroke-width="0.800"/><path d="M912.500 192 h14 q8 0 14 8 l6 8 v6 h-34z" fill="#e2e2e2" stroke="#d2d2d2" stroke-width="0.800"/><path d="M912.500 214 h14 q8 0 14 8 l6 8 v6 h-34z" fill="#e2e2e2" stroke="#d2d2d2" stroke-width="0.800"/><path d="M912.500 236 h14 q8 0 14 8 l6 8 v6 h-34z" fill="#e2e2e2" stroke="#d2d2d2" stroke-width="0.800"/><path d="M912.500 258 h14 q8 0 14 8 l6 8 v6 h-34z" fill="#e2e2e2" stroke="#d2d2d2" stroke-width="0.800"/><path d="M916 173l8 2.500 7-2-1 7-7 7-6-6.500z" fill="#e6431a" stroke="#401000" stroke-width="0.700"/><path d="M916.500 180l7.500 3.500 6.500-3-0.200 2-6.500 6-6.800-6.500z" fill="#fff"/><path d="M917 183l7 4.500 6.500-5-0.400 2-6.300 5-6.500-4.700z" fill="#2a3fa8"/><circle cx="922.500" cy="206" r="6.500" fill="url(#rsb)"/><path d="M925 199l4-3.500M929 195.500h-3M929 195.500v3" stroke="#111" stroke-width="1.200" fill="none"/><path d="M917 232l8-9 3 2.500-8 9z" fill="#e8a070" stroke="#6a3010" stroke-width="0.800"/><path d="M925 223l3-3 3 2.500-3 3z" fill="#d8d8d8" stroke="#555" stroke-width="0.700"/><path d="M916 231q-1 4 1 5l3-2z" fill="#d04020"/><path d="M916 254v-10h5l1.500 2h6v2" fill="#f7d04a" stroke="#3a2c00" stroke-width="0.900"/><path d="M916 254l3-6.500h12l-3 6.500z" fill="#ffe680" stroke="#3a2c00" stroke-width="0.900"/><rect x="916.500" y="264.500" width="14" height="12" fill="#dfe6ff" stroke="#2a3a9a" stroke-width="1.200"/><rect x="916.500" y="264.500" width="14" height="3" fill="#2a3a9a"/><rect x="918" y="269" width="11" height="6.500" fill="#3f5ae0"/><circle cx="923" cy="292" r="5.300" fill="none" stroke="#e00" stroke-width="3.200"/><path d="M923 286.700a5.300 5.300 0 0 1 4.590 2.650" fill="none" stroke="#f0e010" stroke-width="3.200"/><path d="M927.590 289.350a5.300 5.300 0 0 1 0 5.300" fill="none" stroke="#30c030" stroke-width="3.200"/><path d="M927.590 294.650a5.300 5.300 0 0 1-4.590 2.650" fill="none" stroke="#10b0c0" stroke-width="3.200"/><path d="M923 297.300a5.300 5.300 0 0 1-4.590-2.650" fill="none" stroke="#2030d0" stroke-width="3.200"/><path d="M918.410 294.650a5.300 5.300 0 0 1 0-5.300" fill="none" stroke="#a010c0" stroke-width="3.200"/><circle cx="943" cy="292" r="4.500" fill="none" stroke="#b5b5b5" stroke-width="3" stroke-dasharray="2.300 1.200"/><rect x="915" y="304.500" width="25" height="25.500" fill="#c2dcf5" stroke="#3a8ae0" stroke-width="1"/><path d="M917.500 311.500h4l1.500-2.500h7l1.500 2.500h6v13.500h-20z" fill="#333"/><circle cx="928" cy="318.500" r="4.800" fill="#555" stroke="#bbb" stroke-width="1"/><circle cx="928" cy="318.500" r="2.200" fill="#111"/><rect x="915" y="334.500" width="25" height="25" fill="#b4bfce" stroke="#5a6a80" stroke-width="1"/><rect x="917.500" y="337" width="20" height="20" fill="#9aa6b8" stroke="#3a4a60" stroke-width="1"/><rect x="919.500" y="340" width="16" height="14" fill="#fff" stroke="#c8282a" stroke-width="1.300"/><rect x="915" y="364.500" width="25" height="25" fill="#e0e0e0" stroke="#cdcdcd" stroke-width="1"/><circle cx="924" cy="381" r="5.800" fill="url(#rsb)"/><circle cx="931.500" cy="374.500" r="4.300" fill="url(#rsb)"/><circle cx="936.500" cy="369.500" r="3" fill="url(#rsb)"/></svg>
<div class="a" style="left:941px;top:0px;width:8px;height:1049px;background:linear-gradient(90deg,rgba(0,0,0,0),rgba(0,0,0,.06) 50%,rgba(0,0,0,.30));"></div>
<div class="a" style="left:949px;top:0px;width:958px;height:1049px;background:#f0f0f0;border-left:1px solid #c4c4c4;"></div>
<div class="a" style="left:950px;top:0px;width:957px;height:29px;background:#fff;"></div>
<div class="a" style="left:950px;top:29px;width:957px;height:27px;background:linear-gradient(90deg,#f0f0f0,#f4f4f4 60%,#fbfbfb);"></div>
<div class="t" style="left:958.0px;top:8.2px;font-size:12.00px;color:#8c8c8c;letter-spacing:-0.33px;">Grasshopper - OpenGISTerrain</div>
<svg class="a" style="left:1780px;top:0px;" width="127" height="28" viewBox="0 0 127 28"><path d="M9 13.500h10M54.500 8.500h10v10h-10zM100 8.500l10 10M110 8.500l-10 10" fill="none" stroke="#8a8a8a" stroke-width="1"/></svg>
<div class="t" style="left:963.0px;top:37.3px;font-size:12.00px;color:#111;letter-spacing:-0.34px;">File</div>
<div class="t" style="left:1000.4px;top:37.3px;font-size:12.00px;color:#111;letter-spacing:-0.32px;">Edit</div>
<div class="t" style="left:1038.9px;top:37.3px;font-size:12.00px;color:#111;letter-spacing:-0.23px;">View</div>
<div class="t" style="left:1083.2px;top:37.3px;font-size:12.00px;color:#111;letter-spacing:-0.19px;">Display</div>
<div class="t" style="left:1140.0px;top:37.3px;font-size:12.00px;color:#111;letter-spacing:0.03px;">Solution</div>
<div class="t" style="left:1203.0px;top:37.3px;font-size:12.00px;color:#111;letter-spacing:-0.07px;">Help</div>
<div class="t" style="left:1247.0px;top:37.3px;font-size:12.00px;color:#111;letter-spacing:0.11px;">MetaHopper</div>
<div class="t" style="left:1817.3px;top:37.3px;font-size:12.00px;color:#111;letter-spacing:-0.47px;">OpenGISTerrain</div>
<svg class="a" style="left:1788px;top:56px;" width="34" height="24" viewBox="0 0 34 24"><path d="M0 23.500H3.500V5.500Q3.500 1.500 7.500 1.500H26.500Q30.500 1.500 30.500 5.500V23.500H34" fill="url(#tabg)" stroke="#9a9a9a"/><defs><linearGradient id="tabg" x1="0" y1="0" x2="0" y2="1"><stop offset="0" stop-color="#fff"/><stop offset="0.6" stop-color="#fff"/><stop offset="1" stop-color="#e2e2e2"/></linearGradient></defs></svg>
<div class="t" style="left:960.5px;top:61.8px;font-size:12.00px;color:#6a6a6a;">P</div>
<div class="t" style="left:986.4px;top:61.8px;font-size:12.00px;color:#6a6a6a;">M</div>
<div class="t" style="left:1016.2px;top:61.8px;font-size:12.00px;color:#6a6a6a;">S</div>
<div class="t" style="left:1044.6px;top:61.8px;font-size:12.00px;color:#6a6a6a;">V</div>
<div class="t" style="left:1071.3px;top:61.8px;font-size:12.00px;color:#6a6a6a;">C</div>
<div class="t" style="left:1100.5px;top:61.8px;font-size:12.00px;color:#6a6a6a;">S</div>
<div class="t" style="left:1126.2px;top:61.8px;font-size:12.00px;color:#6a6a6a;">M</div>
<div class="t" style="left:1156.1px;top:61.8px;font-size:12.00px;color:#6a6a6a;">X</div>
<div class="t" style="left:1184.3px;top:61.8px;font-size:12.00px;color:#6a6a6a;">T</div>
<div class="t" style="left:1211.5px;top:61.8px;font-size:12.00px;color:#6a6a6a;">D</div>
<div class="t" style="left:1239.4px;top:61.8px;font-size:12.00px;color:#6a6a6a;">H</div>
<div class="t" style="left:1267.3px;top:61.8px;font-size:12.00px;color:#6a6a6a;">H</div>
<div class="t" style="left:1296.2px;top:61.8px;font-size:12.00px;color:#6a6a6a;">Y</div>
<div class="t" style="left:1324.3px;top:61.8px;font-size:12.00px;color:#6a6a6a;">B</div>
<div class="t" style="left:1350.5px;top:61.8px;font-size:12.00px;color:#6a6a6a;">W</div>
<div class="t" style="left:1380.4px;top:61.8px;font-size:12.00px;color:#6a6a6a;">L</div>
<div class="t" style="left:1407.4px;top:61.8px;font-size:12.00px;color:#6a6a6a;">H</div>
<div class="t" style="left:1436.5px;top:61.8px;font-size:12.00px;color:#6a6a6a;">P</div>
<div class="t" style="left:1464.4px;top:61.8px;font-size:12.00px;color:#6a6a6a;">P</div>
<div class="t" style="left:1492.8px;top:61.8px;font-size:12.00px;color:#6a6a6a;">K</div>
<div class="t" style="left:1518.7px;top:61.8px;font-size:12.00px;color:#6a6a6a;">M</div>
<div class="t" style="left:1548.6px;top:61.8px;font-size:12.00px;color:#6a6a6a;">K</div>
<div class="t" style="left:1576.7px;top:61.8px;font-size:12.00px;color:#6a6a6a;">L</div>
<div class="t" style="left:1604.4px;top:61.8px;font-size:12.00px;color:#6a6a6a;">E</div>
<div class="t" style="left:1632.2px;top:61.8px;font-size:12.00px;color:#6a6a6a;">A</div>
<div class="t" style="left:1659.8px;top:61.8px;font-size:12.00px;color:#6a6a6a;">H</div>
<div class="t" style="left:1688.8px;top:61.8px;font-size:12.00px;color:#6a6a6a;">T</div>
<div class="t" style="left:1716.9px;top:61.8px;font-size:12.00px;color:#6a6a6a;">K</div>
<div class="t" style="left:1743.5px;top:61.8px;font-size:12.00px;color:#6a6a6a;">H</div>
<div class="t" style="left:1772.5px;top:61.8px;font-size:12.00px;color:#6a6a6a;">T</div>
<div class="t" style="left:1799.9px;top:60.1px;font-size:12.00px;color:#111;">G</div>
<div class="t" style="left:1828.3px;top:61.8px;font-size:12.00px;color:#6a6a6a;">T</div>
<div class="t" style="left:1855.2px;top:61.8px;font-size:12.00px;color:#6a6a6a;">G</div>
<div class="t" style="left:1883.8px;top:61.8px;font-size:12.00px;color:#6a6a6a;">A</div>
<div class="t" style="left:1901.0px;top:61.8px;font-size:12.00px;color:#6a6a6a;">S</div>
<div class="a" style="left:950px;top:79px;width:957px;height:84px;background:linear-gradient(#dfdfdf,#e4e4e4 60%,#e8e8e8);border-top:1px solid #b4b4b4;"></div>
<div class="a" style="left:950px;top:162px;width:957px;height:5px;background:#f0f0f0;"></div>
<div class="a" style="left:953px;top:82px;width:33px;height:72px;background:linear-gradient(#f2f2f2,#dcdcdc);border:1px solid #4a4a4a;border-radius:5px;overflow:hidden;box-shadow:0 0 2px rgba(0,0,0,.35);"></div>
<div class="a" style="left:954px;top:140px;width:31px;height:13px;background:#1e1e1e;border-radius:0 0 4px 4px;"></div>
<div class="t" style="left:957.0px;top:138.9px;font-size:10.50px;color:#fff;">1. G...</div>
<div class="a" style="left:989px;top:82px;width:117px;height:72px;background:linear-gradient(#f2f2f2,#dcdcdc);border:1px solid #4a4a4a;border-radius:5px;overflow:hidden;box-shadow:0 0 2px rgba(0,0,0,.35);"></div>
<div class="a" style="left:990px;top:140px;width:115px;height:13px;background:#1e1e1e;border-radius:0 0 4px 4px;"></div>
<div class="t" style="left:1009.0px;top:141.1px;font-size:10.50px;color:#fff;letter-spacing:-0.11px;">2. ExtractData</div>
<div class="a" style="left:1109px;top:82px;width:61px;height:72px;background:linear-gradient(#f2f2f2,#dcdcdc);border:1px solid #4a4a4a;border-radius:5px;overflow:hidden;box-shadow:0 0 2px rgba(0,0,0,.35);"></div>
<div class="a" style="left:1110px;top:140px;width:59px;height:13px;background:#1e1e1e;border-radius:0 0 4px 4px;"></div>
<div class="t" style="left:1113.0px;top:138.9px;font-size:10.50px;color:#fff;letter-spacing:-0.14px;">3. Projecti...</div>
<div class="a" style="left:1173px;top:82px;width:61px;height:72px;background:linear-gradient(#f2f2f2,#dcdcdc);border:1px solid #4a4a4a;border-radius:5px;overflow:hidden;box-shadow:0 0 2px rgba(0,0,0,.35);"></div>
<div class="a" style="left:1174px;top:140px;width:59px;height:13px;background:#1e1e1e;border-radius:0 0 4px 4px;"></div>
<div class="t" style="left:1176.0px;top:138.9px;font-size:10.50px;color:#fff;letter-spacing:-0.28px;">4. ExportD...</div>
<div class="a" style="left:1237px;top:82px;width:117px;height:72px;background:linear-gradient(#f2f2f2,#dcdcdc);border:1px solid #4a4a4a;border-radius:5px;overflow:hidden;box-shadow:0 0 2px rgba(0,0,0,.35);"></div>
<div class="a" style="left:1238px;top:140px;width:115px;height:13px;background:#1e1e1e;border-radius:0 0 4px 4px;"></div>
<div class="t" style="left:1268.0px;top:141.1px;font-size:10.50px;color:#fff;letter-spacing:-0.15px;">5. Utilities</div>
<div class="a" style="left:1357px;top:82px;width:61px;height:72px;background:linear-gradient(#f2f2f2,#dcdcdc);border:1px solid #4a4a4a;border-radius:5px;overflow:hidden;box-shadow:0 0 2px rgba(0,0,0,.35);"></div>
<div class="a" style="left:1358px;top:140px;width:59px;height:13px;background:#1e1e1e;border-radius:0 0 4px 4px;"></div>
<div class="t" style="left:1360.8px;top:138.9px;font-size:10.50px;color:#fff;letter-spacing:-0.15px;">6. Downlo...</div>
<svg class="a" style="left:1095px;top:143px;" width="8" height="8" viewBox="0 0 8 8"><path d="M4 0.500v5M1.500 4l2.500 3 2.500-3" fill="none" stroke="#bbb" stroke-width="1.2"/></svg>
<svg class="a" style="left:1344px;top:143px;" width="8" height="8" viewBox="0 0 8 8"><path d="M4 0.500v5M1.500 4l2.500 3 2.500-3" fill="none" stroke="#bbb" stroke-width="1.2"/></svg>
<div class="a" style="left:951px;top:166px;width:955px;height:32px;background:#f9f9f9;border-top:1px solid #6f6f6f;border-left:1px solid #6f6f6f;"></div>
<div class="a" style="left:950px;top:198px;width:2px;height:826px;background:#7c7c7c;"></div>
<div class="a" style="left:1905px;top:166px;width:2px;height:858px;background:#ececec;"></div>
<div class="a" style="left:1015px;top:170px;width:1px;height:24px;background:#d0d0d0;"></div>
<div class="a" style="left:1020px;top:171px;width:136px;height:23px;background:#fff;border:1px solid #7a7a7a;"></div>
<div class="t" style="left:1023.0px;top:175.6px;font-size:12.00px;color:#111;transform:scaleX(0.916);transform-origin:0 0;">44%</div>
<svg class="a" style="left:1140px;top:177px;" width="12" height="10" viewBox="0 0 12 10"><path d="M1.500 2.500l4.500 4.500 4.500-4.500" fill="none" stroke="#333" stroke-width="1.200"/></svg>
<div class="a" style="left:952px;top:198px;width:955px;height:825px;background:#cfcbc3;"></div>
<div class="a" style="left:966px;top:292px;width:941px;height:731px;background:#d4d0c8;border-top:1px solid #111;border-left:1px solid #111;"></div>
<svg class="a" style="left:949px;top:0px;overflow:hidden;" width="958" height="1049" viewBox="949 0 958 1049"><defs><linearGradient id="go" x1="0" y1="0" x2="0" y2="1"><stop offset="0" stop-color="#ffa233"/><stop offset="1" stop-color="#ff8a14"/></linearGradient><linearGradient id="gr" x1="0" y1="0" x2="0" y2="1"><stop offset="0" stop-color="#e21717"/><stop offset="1" stop-color="#c40404"/></linearGradient><linearGradient id="gg" x1="0" y1="0" x2="0" y2="1"><stop offset="0" stop-color="#a6a6b8"/><stop offset="1" stop-color="#8c8c9e"/></linearGradient><linearGradient id="gl" x1="0" y1="0" x2="0" y2="1"><stop offset="0" stop-color="#d0d0d0"/><stop offset="0.5" stop-color="#ececec"/><stop offset="1" stop-color="#d4d4d4"/></linearGradient></defs><path d="M1112 540 C1250 540 1290 375.500 1408 375.500" stroke="#b3b0a8" stroke-width="0.9" fill="none"/><path d="M1112 540 C1230 540 1300 458 1413 458" stroke="#b3b0a8" stroke-width="0.9" fill="none"/><path d="M1112 540 C1260 540 1270 649 1409 649 H1422" stroke="#b3b0a8" stroke-width="0.9" fill="none"/><path d="M1390.600 549 C1440 549 1450 519 1490 519" stroke="#b3b0a8" stroke-width="0.9" fill="none"/><path d="M1390.600 549 C1470 549 1480 497 1566.500 497" stroke="#b3b0a8" stroke-width="0.9" fill="none"/><path d="M1390.600 549 C1480 549 1480 581.500 1568 581.500" stroke="#b3b0a8" stroke-width="0.9" fill="none"/><path d="M1390.600 549 C1440 549 1400 610 1396 650 C1393 690 1405 681 1422 681" stroke="#b3b0a8" stroke-width="0.9" fill="none"/><rect x="1295" y="309" width="189" height="48" rx="9" fill="#a35a55"/><path d="M1394 345 H1484 V426 Q1484 435.500 1474 435.500 V489 Q1474 498 1465 498 H1409 Q1400 498 1400 489 V435.500 Q1394 435.500 1394 426 Z" fill="#a35a55"/><rect x="1285" y="377" width="125" height="36" rx="9" fill="#a35a55"/><path d="M1385 357 H1400 V377 H1385 Q1394 377 1394 367 Q1394 357 1385 357Z" fill="#a35a55"/><path d="M1385 413 H1400 V430 Q1394 413 1385 413Z" fill="#a35a55"/><rect x="1408.500" y="636" width="86" height="64" rx="9" fill="#a35a55"/><rect x="1591.500" y="372.500" width="222" height="75.500" fill="#7fd6ea" stroke="#6cc0d6" stroke-width="1"/><rect x="1485.500" y="460.500" width="235.500" height="166" fill="#5ba2e8" stroke="#4f93d6" stroke-width="1"/><rect x="1277" y="531" width="127.500" height="45" rx="9" fill="#ee5656"/><rect x="1256" y="562" width="187" height="57.500" rx="9" fill="#ee5656"/><path d="M1403.500 552 H1404.500 Q1404.500 562 1414.500 562 V563 H1403.500Z" fill="#ee5656"/><path d="M1278 552 H1277 Q1277 562 1267 562 V563 H1278Z" fill="#ee5656"/><path d="M1112 540 C1250 540 1290 375.500 1408 375.500" stroke="rgba(70,50,50,0.16)" stroke-width="0.9" fill="none"/><path d="M1112 540 C1230 540 1300 458 1413 458" stroke="rgba(70,50,50,0.16)" stroke-width="0.9" fill="none"/><path d="M1112 540 C1260 540 1270 649 1409 649 H1422" stroke="rgba(70,50,50,0.16)" stroke-width="0.9" fill="none"/><path d="M1390.600 549 C1440 549 1450 519 1490 519" stroke="rgba(70,50,50,0.16)" stroke-width="0.9" fill="none"/><path d="M1390.600 549 C1470 549 1480 497 1566.500 497" stroke="rgba(70,50,50,0.16)" stroke-width="0.9" fill="none"/><path d="M1390.600 549 C1480 549 1480 581.500 1568 581.500" stroke="rgba(70,50,50,0.16)" stroke-width="0.9" fill="none"/><path d="M1390.600 549 C1440 549 1400 610 1396 650 C1393 690 1405 681 1422 681" stroke="rgba(70,50,50,0.16)" stroke-width="0.9" fill="none"/><path d="M1387.600 395 H1408" stroke="#333" stroke-width="1" fill="none"/><path d="M1044 540 H1070" stroke="#333" stroke-width="1" fill="none"/><path d="M1471 416.500 C1500 416.500 1500 448 1511 458 C1525 475 1540 488 1566.500 488" stroke="#333" stroke-width="1" fill="none"/><path d="M1471 416.500 C1505 417 1515 430 1520 455 C1523 475 1519 490 1518 506" stroke="#333" stroke-width="1" fill="none"/><path d="M1460 454 C1476 454 1475 470 1491 470" stroke="#333" stroke-width="1" fill="none"/><path d="M1460 463 C1476 463 1475 479 1491 479" stroke="#333" stroke-width="1" fill="none"/><path d="M1460 471 C1480 471 1468 511 1490 511" stroke="#333" stroke-width="1" fill="none"/><path d="M1460 480 C1482 480 1466 519 1490 519" stroke="#333" stroke-width="1" fill="none"/><path d="M1521.500 479 H1566.500" stroke="#333" stroke-width="1" fill="none"/><path d="M1521 520 C1545 520 1540 563.500 1568 563.500" stroke="#333" stroke-width="1" fill="none"/><path d="M1517 534 C1517 565 1545 572 1568 572" stroke="#333" stroke-width="1" fill="none"/><path d="M1471 389.500 C1495 389.500 1485 342.500 1512.500 342.500" stroke="#e8623f" stroke-width="1" fill="none"/><path d="M1471 399.500 C1530 399.500 1540 428 1596 428" stroke="#e8623f" stroke-width="1" fill="none"/><path d="M1596 438.500 C1545 438.500 1530 455 1535 490 C1545 530 1560 545 1568 558" stroke="#e8623f" stroke-width="1" fill="none"/><path d="M1601 623 C1612 640 1613 655 1612 674.500" stroke="#e8623f" stroke-width="1" fill="none"/><path d="M1624 433.500 H1653.600M1681 433.500 H1708" stroke="#e8623f" stroke-width="1" fill="none"/><path d="M1624 429 C1690 429 1720 418 1780 418" stroke="#e8623f" stroke-width="1" fill="none"/><path d="M1734.500 433 C1755 433 1760 425.500 1780 425.500" stroke="#e8623f" stroke-width="1" fill="none"/><path d="M1809 421 H1832M1860 421 H1885" stroke="#e8623f" stroke-width="1" fill="none"/><path d="M1637.500 506 H1687" stroke="#d8707a" stroke-width="1.2" fill="none"/><path d="M1639 590 C1668 590 1660 515 1687 515" stroke="#d8707a" stroke-width="1.2" fill="none"/><path d="M1716.600 502 C1770 502 1800 490 1850 490" stroke="#e8623f" stroke-width="1" fill="none"/><path d="M1716.600 502 C1780 502 1850 512 1907 535" stroke="#e8623f" stroke-width="1" fill="none"/><path d="M1718.600 658 C1790 655 1775 590 1790 535 C1800 505 1825 499.500 1850 499.500" stroke="#e8623f" stroke-width="1" fill="none"/><path d="M1494 661 C1505 661 1508 664.500 1522 664.500" stroke="#e8623f" stroke-width="1" fill="none"/><path d="M1494 683 C1506 688 1506 700.500 1522 700.500" stroke="#e8623f" stroke-width="1" fill="none"/><path d="M1550.400 668.500 C1570 668.500 1572 680 1591.500 680" stroke="#e8623f" stroke-width="1" fill="none"/><path d="M1550.400 704 C1570 704 1572 688.500 1591.500 688.500" stroke="#e8623f" stroke-width="1" fill="none"/><path d="M1550.400 708 C1580 708 1585 692 1605 694" stroke="#e8623f" stroke-width="1" fill="none"/><path d="M1619.600 684 C1632 684 1634 675 1646 675" stroke="#e8623f" stroke-width="1" fill="none"/><path d="M1674.600 675 C1684 675 1680 658 1690 658" stroke="#e8623f" stroke-width="1" fill="none"/><path d="M1839.800 540 C1852 540 1842 512 1850 509" stroke="#555" stroke-width="1" fill="none"/><rect x="981.0" y="312.5" width="44.5" height="13.0" rx="2" fill="url(#gg)" stroke="#3a3a44" stroke-width="1.3"/><rect x="1070.4" y="533.0" width="41.6" height="13.8" rx="2" fill="url(#gg)" stroke="#3a3a44" stroke-width="1.3"/><rect x="997" y="534.600" width="47" height="10.400" rx="1.500" fill="url(#gg)" stroke="#444" stroke-width="0.900"/><rect x="1022" y="535.500" width="21" height="8.600" rx="1" fill="#333" stroke="#111" stroke-width="0.800"/><rect x="1298.4" y="390.4" width="89.2" height="8.8" rx="1.5" fill="url(#gl)" stroke="#555" stroke-width="0.9"/><rect x="1298.4" y="390.4" width="35.3" height="8.8" rx="1.5" fill="url(#gg)" stroke="#444" stroke-width="0.9"/><rect x="1290.3" y="544.6" width="100.3" height="8.8" rx="1.5" fill="url(#gl)" stroke="#555" stroke-width="0.9"/><rect x="1290.3" y="544.6" width="46.2" height="8.8" rx="1.5" fill="url(#gg)" stroke="#444" stroke-width="0.9"/><rect x="1762.2" y="535.4" width="77.6" height="8.8" rx="1.5" fill="url(#gl)" stroke="#555" stroke-width="0.9"/><rect x="1762.2" y="535.4" width="24.4" height="8.8" rx="1.5" fill="url(#gg)" stroke="#444" stroke-width="0.9"/><rect x="1861.2" y="620.0" width="50.8" height="9.0" rx="1.5" fill="url(#gl)" stroke="#555" stroke-width="0.9"/><rect x="1861.2" y="620.0" width="21.4" height="9.0" rx="1.5" fill="url(#gg)" stroke="#444" stroke-width="0.9"/><rect x="1408.0" y="366.6" width="63.3" height="54.9" rx="2" fill="url(#go)" stroke="#5a3206" stroke-width="1.3"/><rect x="1413.4" y="447.8" width="46.3" height="37.8" rx="2" fill="url(#go)" stroke="#5a3206" stroke-width="1.3"/><rect x="1512.5" y="320.2" width="71.5" height="44.1" rx="1" fill="#fffb55" stroke="#3a3a10" stroke-width="1.3"/><rect x="1596.0" y="424.2" width="27.8" height="18.8" rx="2" fill="url(#go)" stroke="#5a3206" stroke-width="1.3"/><rect x="1653.6" y="427.6" width="27.2" height="12.1" rx="2" fill="url(#go)" stroke="#5a3206" stroke-width="1.3"/><rect x="1708.0" y="424.2" width="26.5" height="18.8" rx="2" fill="url(#go)" stroke="#5a3206" stroke-width="1.3"/><rect x="1780.3" y="411.6" width="28.9" height="19.4" rx="2" fill="url(#gg)" stroke="#3a3a44" stroke-width="1.3"/><rect x="1832.3" y="414.6" width="27.7" height="12.6" rx="2" fill="url(#gg)" stroke="#3a3a44" stroke-width="1.3"/><rect x="1885.0" y="415.8" width="27.0" height="19.7" rx="2" fill="url(#gg)" stroke="#3a3a44" stroke-width="1.3"/><rect x="1850.3" y="485.5" width="61.7" height="27.7" rx="2" fill="url(#go)" stroke="#5a3206" stroke-width="1.3"/><rect x="1566.5" y="473.8" width="71.0" height="64.4" rx="2" fill="url(#gr)" stroke="#4a0a0a" stroke-width="1.3"/><rect x="1568.0" y="558.2" width="71.0" height="64.3" rx="2" fill="url(#gr)" stroke="#4a0a0a" stroke-width="1.3"/><rect x="1491.0" y="465.2" width="30.5" height="28.2" rx="2" fill="url(#gg)" stroke="#3a3a44" stroke-width="1.3"/><rect x="1490.2" y="505.4" width="30.5" height="28.6" rx="2" fill="url(#gg)" stroke="#3a3a44" stroke-width="1.3"/><rect x="1687.0" y="491.5" width="29.6" height="37.7" rx="2" fill="url(#go)" stroke="#5a3206" stroke-width="1.3"/><rect x="1422.0" y="649.5" width="59.2" height="36.9" rx="2" fill="url(#go)" stroke="#5a3206" stroke-width="1.3"/><rect x="1521.9" y="659.0" width="28.5" height="19.0" rx="2" fill="url(#go)" stroke="#5a3206" stroke-width="1.3"/><rect x="1522.3" y="694.4" width="28.1" height="19.3" rx="2" fill="url(#go)" stroke="#5a3206" stroke-width="1.3"/><rect x="1591.5" y="674.6" width="28.1" height="19.4" rx="2" fill="url(#go)" stroke="#5a3206" stroke-width="1.3"/><rect x="1646.0" y="668.8" width="28.6" height="12.2" rx="2" fill="url(#go)" stroke="#5a3206" stroke-width="1.3"/><rect x="1690.0" y="648.6" width="28.6" height="18.9" rx="2" fill="url(#go)" stroke="#5a3206" stroke-width="1.3"/><defs><linearGradient id="hnd" x1="0" y1="0" x2="0" y2="1"><stop offset="0" stop-color="#d8d8d8"/><stop offset="0.35" stop-color="#a8a8a8"/><stop offset="1" stop-color="#7c7c7c"/></linearGradient></defs><rect x="951.500" y="995.500" width="7" height="27.500" fill="url(#hnd)" stroke="#111" stroke-width="1"/></svg>
<div class="t" style="left:1311.0px;top:325.0px;font-size:8.00px;color:#3a1414;letter-spacing:-0.05px;font-weight:bold;">Index 2 equals CNiAltura which translates</div>
<div class="t" style="left:1311.0px;top:333.9px;font-size:8.00px;color:#3a1414;letter-spacing:-0.04px;font-weight:bold;">to Height of the Terrain Curve.</div>
<div class="t" style="left:1626.0px;top:379.2px;font-size:8.00px;color:#1d3a44;letter-spacing:-0.24px;font-weight:bold;">This sets every height to 0. Good idea to</div>
<div class="t" style="left:1626.0px;top:387.9px;font-size:8.00px;color:#1d3a44;letter-spacing:-0.28px;font-weight:bold;">keep track of the original heights in case</div>
<div class="t" style="left:1626.0px;top:396.6px;font-size:8.00px;color:#1d3a44;letter-spacing:-0.24px;font-weight:bold;">you want to create a geo-referenced file</div>
<div class="t" style="left:1626.0px;top:405.2px;font-size:8.00px;color:#1d3a44;letter-spacing:-0.34px;font-weight:bold;">from this.</div>
<div class="t" style="left:1271.9px;top:577.7px;font-size:8.00px;color:#4a0f0f;letter-spacing:-0.04px;font-weight:bold;">Web Mercator projection is referenced by</div>
<div class="t" style="left:1271.9px;top:586.7px;font-size:8.00px;color:#4a0f0f;letter-spacing:-0.02px;font-weight:bold;">3857, you should set this EPSG code to</div>
<div class="t" style="left:1271.9px;top:595.7px;font-size:8.00px;color:#4a0f0f;letter-spacing:-0.08px;font-weight:bold;">the one used on your specific place.</div>
<div class="t" style="left:975.2px;top:482.5px;font-size:11.00px;color:#1c1c1c;letter-spacing:0.33px;-webkit-text-stroke:0.3px #1c1c1c;">This should point to:</div>
<div class="t" style="left:975.2px;top:495.1px;font-size:11.00px;color:#1c1c1c;letter-spacing:0.46px;-webkit-text-stroke:0.3px #1c1c1c;">..\GrasshopperScripts\Data\Vector\Terrain\TerrainCurves.shp</div>
<div class="t" style="left:975.2px;top:507.7px;font-size:11.00px;color:#1c1c1c;letter-spacing:0.34px;-webkit-text-stroke:0.3px #1c1c1c;">or any geo-referenced file with terrain</div>
<div class="t" style="left:975.2px;top:520.3px;font-size:11.00px;color:#1c1c1c;letter-spacing:0.10px;-webkit-text-stroke:0.3px #1c1c1c;">data</div>
<svg class="a" style="left:1843px;top:968px;" width="50" height="50" viewBox="0 0 50 50"><defs><radialGradient id="cw" cx="0.5" cy="0.5" r="0.5"><stop offset="0" stop-color="#fafafa"/><stop offset="1" stop-color="#b9b9b9"/></radialGradient></defs><path d="M8 14 A19.500 19.500 0 0 1 46 18" fill="none" stroke="#111" stroke-width="2.600"/><path d="M2 5.500l9 2-4.500 6.500z" fill="#111"/><circle cx="27" cy="25.500" r="19.500" fill="url(#cw)" stroke="#111" stroke-width="1.300"/><circle cx="27" cy="25.500" r="17.800" fill="none" stroke="#fff" stroke-width="1.500"/><path d="M14.500 13l5 1-4 4zM39.500 13l-5 1 4 4zM14.500 38l5-1-4-4zM39.500 38l-5-1 4-4z" fill="#fff"/></svg>
<div class="a" style="left:950px;top:1023px;width:957px;height:24px;background:#f0f0f0;border-top:2px solid #fbfbfb;"></div>
<div class="t" style="left:957.8px;top:1030.4px;font-size:12.00px;color:#222;transform:scaleX(0.749);transform-origin:0 0;">...</div>
<div class="t" style="left:1834.5px;top:1031.3px;font-size:12.00px;color:#666;transform:scaleX(0.899);transform-origin:0 0;">1.0.0007</div>
<svg class="a" style="left:1893px;top:1033px;" width="12" height="12" viewBox="0 0 12 12"><path d="M9 2h2v2h-2zM9 6h2v2h-2zM5 6h2v2h-2zM9 10h2v1h-2zM5 10h2v1h-2zM1 10h2v1h-2z" fill="#a0a0a0"/></svg>
<svg class="a" style="left:949px;top:0px;" width="958" height="200" viewBox="949 0 958 200"><text x="969" y="95" font-family="Liberation Sans" font-weight="bold" font-size="7" fill="#c01020" stroke="#300" stroke-width="0.35" letter-spacing="-0.3" text-anchor="middle">GDAL</text><text x="969" y="102" font-family="Liberation Sans" font-weight="bold" font-size="7" fill="#c01020" stroke="#300" stroke-width="0.35" letter-spacing="-0.3" text-anchor="middle" textLength="22" lengthAdjust="spacingAndGlyphs">DRIVERS</text><circle cx="971" cy="128" r="7.500" fill="#8fd0f0"/><path d="M966 126q3-4 6-2t-1 5-5-3z" fill="#3a9a4a"/><path d="M960 121l8-5M962 116l3 5" stroke="#444" stroke-width="1.300"/><text x="969" y="135" font-family="Liberation Sans" font-weight="bold" font-size="6" fill="#1a2a3a" stroke="#300" stroke-width="0.35" letter-spacing="0" text-anchor="middle">GDAL</text><circle cx="1005" cy="93" r="6.5" fill="#1c6a8c"/><path d="M1002.8 86.0l2.200 3 2.200-3zM1002.8 100.0l2.200-3 2.200 3z" fill="#e4e4e4"/><path d="M1005 88.5v9.0" stroke="#2a86ac" stroke-width="1.2"/><circle cx="1004.5" cy="93" r="1.500" fill="#b0307a"/><text x="1005" y="106.3" font-family="Liberation Sans" font-weight="bold" font-size="6.3" fill="#a0101c" stroke="#300" stroke-width="0.35" letter-spacing="1" text-anchor="middle">RAST</text><path d="M1022 97h7l1.500 2h12.500v12h-21z" fill="#f7c83a"/><rect x="1027" y="92" width="12" height="8" fill="#eee" stroke="#ccc" stroke-width="0.500"/><path d="M1022 100h21v9h-21z" fill="#fad24a"/><circle cx="1061" cy="93" r="6.5" fill="#1c6a8c"/><path d="M1058.8 86.0l2.200 3 2.200-3zM1058.8 100.0l2.200-3 2.200 3z" fill="#e4e4e4"/><path d="M1061 88.5v9.0" stroke="#2a86ac" stroke-width="1.2"/><circle cx="1060.5" cy="93" r="1.500" fill="#b0307a"/><text x="1061" y="106.3" font-family="Liberation Sans" font-weight="bold" font-size="6.3" fill="#a0101c" stroke="#300" stroke-width="0.35" letter-spacing="1" text-anchor="middle">VEC</text><path d="M1078 100l8.500 0 4-3.500v7.500l-4 3.500h-8.500z" fill="#c98a1a" stroke="#1a1000" stroke-width="1"/><path d="M1078 100l4-3.500h8.500l-4 3.500z" fill="#e0a030" stroke="#1a1000" stroke-width="1"/><path d="M1086.5 100v7.500" stroke="#1a1000"/><path d="M1079 96.5v-3.500h3" fill="none" stroke="#e02020" stroke-width="1.100"/><path d="M1081 93.5l5 5" stroke="#e02020" stroke-width="2"/><path d="M1087.5 100l-4.500-0.500 4-4z" fill="#e02020"/><text x="1092" y="94" font-family="Liberation Sans" font-weight="bold" font-size="6" fill="#a0101c" stroke="#300" stroke-width="0.35" letter-spacing="1" text-anchor="middle">VEC</text><text x="1005" y="119" font-family="Liberation Sans" font-weight="bold" font-size="5.6" fill="#a0101c" stroke="#300" stroke-width="0.35" letter-spacing="0" text-anchor="middle">BANDS</text><text x="1005" y="126" font-family="Liberation Sans" font-weight="bold" font-size="5.6" fill="#a0101c" stroke="#300" stroke-width="0.35" letter-spacing="0" text-anchor="middle">FROM</text><text x="1005" y="134" font-family="Liberation Sans" font-weight="bold" font-size="6" fill="#a0101c" stroke="#300" stroke-width="0.35" letter-spacing="1" text-anchor="middle">RAST</text><path d="M1022 128l8.500 0 4-3.500v7.500l-4 3.500h-8.500z" fill="#c98a1a" stroke="#1a1000" stroke-width="1"/><path d="M1022 128l4-3.500h8.500l-4 3.500z" fill="#e0a030" stroke="#1a1000" stroke-width="1"/><path d="M1030.5 128v7.500" stroke="#1a1000"/><path d="M1023 124.5v-3.500h3" fill="none" stroke="#e02020" stroke-width="1.100"/><path d="M1025 121.5l5 5" stroke="#e02020" stroke-width="2"/><path d="M1031.5 128l-4.500-0.500 4-4z" fill="#e02020"/><text x="1036" y="121.5" font-family="Liberation Sans" font-weight="bold" font-size="6" fill="#a0101c" stroke="#300" stroke-width="0.35" letter-spacing="0" text-anchor="middle">RAST</text><rect x="1051.500" y="115.500" width="19.500" height="19.500" fill="none" stroke="#d02020" stroke-width="1"/><circle cx="1071" cy="115.500" r="1.500" fill="#400"/><circle cx="1051.500" cy="135" r="1.500" fill="#400"/><text x="1061.5" y="128" font-family="Liberation Sans" font-weight="bold" font-size="6" fill="#a0101c" stroke="#300" stroke-width="0.35" letter-spacing="1" text-anchor="middle">VEC</text><circle cx="1125" cy="97" r="9" fill="#1c6a8c"/><path d="M1122.8 87.5l2.200 3 2.200-3zM1122.8 106.5l2.200-3 2.200 3z" fill="#e4e4e4"/><path d="M1125 90v14" stroke="#2a86ac" stroke-width="1.2"/><circle cx="1124.5" cy="97" r="1.500" fill="#b0307a"/><text x="1153" y="95" font-family="Liberation Sans" font-weight="bold" font-size="8.8" fill="#a0101c" stroke="#300" stroke-width="0.35" letter-spacing="0" text-anchor="middle">180</text><text x="1153" y="106" font-family="Liberation Sans" font-weight="bold" font-size="8.8" fill="#a0101c" stroke="#300" stroke-width="0.35" letter-spacing="0" text-anchor="middle">->90</text><path d="M1114 117q4 0 3 5t-2 9 3 4" fill="none" stroke="#111" stroke-width="1"/><circle cx="1119" cy="130" r="0.900" fill="#111"/><rect x="1125" y="115" width="10" height="8.500" fill="#1030c0"/><path d="M1128 117l4 1-1 4-3-1z" fill="#30c040"/><path d="M1122 135l6-6M1126 127.500l3.500-0.500-0.500 3.500" stroke="#e01818" stroke-width="2.200" fill="none"/><path d="M1141 114l7 7M1163 114l-7 7M1141 136l7-7M1163 136l-7-7" stroke="#111" stroke-width="1.200"/><path d="M1148.500 117v4.500h-4.500M1155.500 117v4.500h4.500M1148.500 133v-4.500h-4.500M1155.500 133v-4.500h4.500" fill="none" stroke="#111" stroke-width="1.200"/><path d="M1180 94l11-5 5 11-11 5z" fill="none" stroke="#222" stroke-width="1"/><path d="M1178 102l20-12M1182 88l12 18" stroke="#e8c8c8" stroke-width="0.600"/><text x="1217" y="95" font-family="Liberation Sans" font-weight="bold" font-size="9" fill="#a0101c" stroke="#300" stroke-width="0.35" letter-spacing="0" text-anchor="middle">3DM</text><text x="1217.5" y="105.5" font-family="Liberation Sans" font-weight="bold" font-size="9" fill="#a0101c" stroke="#300" stroke-width="0.35" letter-spacing="1.5" text-anchor="middle">GIS</text><path d="M1179 114l3 4M1181 113l3 4M1183 119l5 6" stroke="#8a9aa6" stroke-width="1.600"/><path d="M1187 123l4 4" stroke="#111" stroke-width="1.800"/><path d="M1193 129l-4-0.500 3-3z" fill="#111"/><circle cx="1195" cy="132" r="4" fill="#7fd0d8"/><path d="M1192 134h6" stroke="#2a6a7a" stroke-width="1.200"/><path d="M1245 88h9l5 5v13h-14z" fill="#fff" stroke="#7a0a14" stroke-width="2"/><path d="M1248 96h8M1248 99.500h8M1248 103h5" stroke="#7a0a14" stroke-width="1.300"/><rect x="1253" y="100" width="11" height="8" fill="#111"/><path d="M1253 102h11" stroke="#666" stroke-width="0.700"/><path d="M1271 90l14 10.500M1276 88l5 15" stroke="#111" stroke-width="1.700" fill="none"/><circle cx="1287.5" cy="101.5" r="2.600" fill="none" stroke="#111" stroke-width="1.600"/><circle cx="1282" cy="106.5" r="2.600" fill="none" stroke="#111" stroke-width="1.600"/><text x="1288" y="92" font-family="Liberation Sans" font-weight="bold" font-size="5.5" fill="#a0101c" stroke="#300" stroke-width="0.35" letter-spacing="0.8" text-anchor="middle">VEC</text><text x="1308.7" y="98.5" font-family="Liberation Sans" font-weight="bold" font-size="9.5" fill="#a0101c" stroke="#300" stroke-width="0.35" letter-spacing="0" text-anchor="middle">NO</text><path d="M1305 102h2M1310 102h2" stroke="#a0101c" stroke-width="1.200"/><circle cx="1337" cy="97" r="10" fill="none" stroke="#111" stroke-width="1.300"/><path d="M1341.5 90.5l-2.500 7.500-6 4.500 2.500-7.500z" fill="#111"/><text x="1337" y="106.5" font-family="Liberation Sans" font-weight="bold" font-size="5.5" fill="#a0101c" stroke="#300" stroke-width="0.35" letter-spacing="0.3" text-anchor="middle">RAST</text><path d="M1242 118l14 10.500M1247 116l5 15" stroke="#111" stroke-width="1.700" fill="none"/><circle cx="1258.5" cy="129.5" r="2.600" fill="none" stroke="#111" stroke-width="1.600"/><circle cx="1253" cy="134.5" r="2.600" fill="none" stroke="#111" stroke-width="1.600"/><text x="1258" y="120" font-family="Liberation Sans" font-weight="bold" font-size="5.5" fill="#a0101c" stroke="#300" stroke-width="0.35" letter-spacing="0.8" text-anchor="middle">RAS</text><circle cx="1274.5" cy="118" r="3.500" fill="#9fd8e8"/><rect x="1280.5" y="127" width="11" height="8" fill="#111"/><text x="1281.5" y="122" font-family="Liberation Sans" font-weight="bold" font-size="7" fill="#a0101c" stroke="#300" stroke-width="0.35" letter-spacing="-0.3" text-anchor="middle">GDAL</text><text x="1280.5" y="131" font-family="Liberation Sans" font-weight="bold" font-size="7" fill="#a0101c" stroke="#300" stroke-width="0.35" letter-spacing="-0.3" text-anchor="middle">INFO</text><circle cx="1302.5" cy="118" r="3.500" fill="#9fd8e8"/><rect x="1308.5" y="127" width="11" height="8" fill="#111"/><text x="1309.5" y="122" font-family="Liberation Sans" font-weight="bold" font-size="7" fill="#a0101c" stroke="#300" stroke-width="0.35" letter-spacing="-0.3" text-anchor="middle">OGR</text><text x="1308.5" y="131" font-family="Liberation Sans" font-weight="bold" font-size="7" fill="#a0101c" stroke="#300" stroke-width="0.35" letter-spacing="-0.3" text-anchor="middle">INFO</text><circle cx="1337" cy="125" r="10" fill="none" stroke="#111" stroke-width="1.300"/><path d="M1341.5 118.5l-2.500 7.500-6 4.500 2.500-7.500z" fill="#111"/><text x="1337" y="134.5" font-family="Liberation Sans" font-weight="bold" font-size="5.5" fill="#a0101c" stroke="#300" stroke-width="0.35" letter-spacing="0.3" text-anchor="middle">VEC</text><path d="M1366 87h9l5 5v14h-14z" fill="#fff" stroke="#111" stroke-width="1.800" stroke-linejoin="round"/><path d="M1369 94h8M1369 98h8M1369 102h8" stroke="#30b040" stroke-width="1.600"/><path d="M1369 96h7M1369 100h6" stroke="#111" stroke-width="0.800"/><path d="M1389 108v-12l3-5 3 4 3-6 3 6 3-4 3 5 3-5v17z" fill="#4a7a3a" stroke="#2a4a20" stroke-width="0.600"/><path d="M1389 108q5-9 10-3t14-4v7z" fill="#5a8a48"/><circle cx="1376" cy="122" r="6" fill="#e8f4e8" stroke="#9ac0a0" stroke-width="1.500"/><path d="M1365 125l8 10" stroke="#888" stroke-width="2"/><path d="M1364 114h8v6h3.500l-7.500 7-7.500-7h3.500z" fill="#f01818"/><path d="M1363 124l6 5-4 5z" fill="#a8d0a0"/><text x="1378" y="136" font-family="Liberation Sans" font-weight="bold" font-size="5.5" fill="#a0101c" stroke="#300" stroke-width="0.35" letter-spacing="1" text-anchor="middle">OSM</text></svg>
<svg class="a" style="left:949px;top:160px;" width="958" height="40" viewBox="949 160 958 40"><defs><linearGradient id="tg" x1="0" y1="0" x2="0" y2="1"><stop offset="0" stop-color="#b4e07a"/><stop offset="1" stop-color="#5aa822"/></linearGradient><linearGradient id="tb" x1="0" y1="0" x2="0" y2="1"><stop offset="0" stop-color="#4a8af0"/><stop offset="1" stop-color="#0a3ac0"/></linearGradient><linearGradient id="trd" x1="0" y1="0" x2="1" y2="1"><stop offset="0" stop-color="#e83a2a"/><stop offset="1" stop-color="#8a0a0a"/></linearGradient><linearGradient id="tgr" x1="0" y1="0" x2="1" y2="1"><stop offset="0" stop-color="#8ad040"/><stop offset="1" stop-color="#2a7a10"/></linearGradient><linearGradient id="tor" x1="0" y1="0" x2="1" y2="0"><stop offset="0" stop-color="#c05a00"/><stop offset="0.48" stop-color="#ffa030"/><stop offset="0.5" stop-color="#fff"/><stop offset="1" stop-color="#c8c8c8"/></linearGradient><radialGradient id="tbl" cx="0.4" cy="0.35" r="0.7"><stop offset="0" stop-color="#a8dcff"/><stop offset="1" stop-color="#3a7ae0"/></radialGradient><linearGradient id="tgy" x1="0" y1="0" x2="1" y2="1"><stop offset="0" stop-color="#fff"/><stop offset="1" stop-color="#9a9a9a"/></linearGradient></defs><path d="M961 172h9l3 3v5h-12z" fill="#e8e8e8" stroke="#a8a8a8" stroke-width="0.800"/><path d="M956.500 193.500v-12.500h5l2-2.500h11.500v15z" fill="url(#tg)" stroke="#3a8a12" stroke-width="1"/><path d="M986 171.500h20v22h-18l-2-2z" fill="url(#tb)" stroke="#0a2a8a" stroke-width="1.200"/><rect x="989.500" y="172" width="13" height="9" fill="#e4e4e4" stroke="#888" stroke-width="0.600"/><path d="M991 175h10M991 177.500h10" stroke="#bbb" stroke-width="0.800"/><rect x="990.500" y="185" width="11" height="8" fill="#8ab0f0" stroke="#0a2a8a" stroke-width="0.800"/><rect x="992" y="186.500" width="3.500" height="5.500" fill="#1a4ad0"/><path d="M1164 179.500v-6h6M1175.500 173.500h6v6M1164 186.500v6h6M1181.500 186.500v6h-6" fill="none" stroke="#111" stroke-width="3.600"/><path d="M1170.800 181l4 4M1174.800 181l-4 4" stroke="#111" stroke-width="1.500"/><path d="M1190.500 181.500h6l-3 3.500z" fill="#111"/><path d="M1204 183q10.500-12 21.500 0-10.500 11-21.500 0z" fill="#fff" stroke="#0a2a5a" stroke-width="1.700"/><circle cx="1214.800" cy="182.500" r="5" fill="#3aa0f0" stroke="#0a3a7a" stroke-width="0.800"/><circle cx="1214.800" cy="182.500" r="2.300" fill="#06204a"/><path d="M1232.500 181.500h6l-3 3.500z" fill="#111"/><path d="M1252 186l10-11 4 2.500-10 11.500z" fill="#e03a2a" stroke="#7a1a10" stroke-width="0.700"/><path d="M1262 175l2-2.500 3.500 2.500-1.500 2.500z" fill="#f0a0a0"/><path d="M1252 186l-1.500 5 5.500-2z" fill="#e8c090"/><path d="M1245 180q2 12 9 11t5-6" fill="none" stroke="#5a1a10" stroke-width="1.600"/><g transform="translate(1719 177.5) rotate(-38) scale(0.85)"><path d="M-5.500 -7.800L5.500 -7.800A3.800 7.800 0 0 1 5.500 7.800L-5.500 7.800A3.800 7.800 0 0 1 -5.500 -7.800Z" fill="url(#tgy)" stroke="#9a9a9a" stroke-width="0.6"/><ellipse cx="5.500" cy="0" rx="3.800" ry="7.800" fill="#f4f4f4" stroke="#9a9a9a" stroke-width="0.6"/><ellipse cx="5.800" cy="0" rx="2.300" ry="5" fill="#dcdcdc" stroke="#9a9a9a" stroke-width="0.6"/></g><path d="M1709.500 187q9-7 18.500 0-9 8.500-18.500 0z" fill="#262626"/><path d="M1711 189.500q8 5.500 15.500 0" fill="none" stroke="#666" stroke-width="1"/><g transform="translate(1748 182) rotate(-38) scale(1.0)"><path d="M-5.500 -7.800L5.500 -7.800A3.800 7.800 0 0 1 5.500 7.800L-5.500 7.800A3.800 7.800 0 0 1 -5.500 -7.800Z" fill="#fff" stroke="#222" stroke-width="0.9"/><ellipse cx="5.500" cy="0" rx="3.800" ry="7.800" fill="#fff" stroke="#222" stroke-width="0.9"/><ellipse cx="5.800" cy="0" rx="2.300" ry="5" fill="#fff" stroke="#222" stroke-width="0.9"/></g><ellipse cx="1743" cy="186" rx="2.600" ry="4.300" fill="none" stroke="#777" stroke-width="0.700" transform="rotate(-38 1743 186)"/><rect x="1763.500" y="168.500" width="27" height="27" fill="#f4f8ff" stroke="#4a90e0" stroke-width="1"/><g transform="translate(1777 182) rotate(-38) scale(1.05)"><path d="M-5.500 -7.800L5.500 -7.800A3.800 7.800 0 0 1 5.500 7.800L-5.500 7.800A3.800 7.800 0 0 1 -5.500 -7.800Z" fill="url(#trd)"/><ellipse cx="5.500" cy="0" rx="3.800" ry="7.800" fill="#d83a2a"/><ellipse cx="5.800" cy="0" rx="2.300" ry="5" fill="#8a0e0e"/></g><path d="M1799.500 172v22M1866.500 172v22" stroke="#cfcfcf" stroke-width="1"/><g transform="translate(1818 185.5) rotate(-38) scale(0.8)"><path d="M-5.500 -7.800L5.500 -7.800A3.800 7.800 0 0 1 5.500 7.800L-5.500 7.800A3.800 7.800 0 0 1 -5.500 -7.800Z" fill="url(#tgy)" stroke="#aaa" stroke-width="0.5"/><ellipse cx="5.500" cy="0" rx="3.800" ry="7.800" fill="#eee" stroke="#aaa" stroke-width="0.5"/><ellipse cx="5.800" cy="0" rx="2.300" ry="5" fill="#d0d0d0" stroke="#aaa" stroke-width="0.5"/></g><g transform="translate(1824 178.5) rotate(-38) scale(0.95)"><path d="M-5.500 -7.800L5.500 -7.800A3.800 7.800 0 0 1 5.500 7.800L-5.500 7.800A3.800 7.800 0 0 1 -5.500 -7.800Z" fill="url(#tgr)"/><ellipse cx="5.500" cy="0" rx="3.800" ry="7.800" fill="#6ac030"/><ellipse cx="5.800" cy="0" rx="2.300" ry="5" fill="#1a6a08"/></g><path d="M1812 172.500l17 18" stroke="#222" stroke-width="1.100"/><ellipse cx="1851" cy="192" rx="8" ry="2" fill="#d8d8d8"/><circle cx="1848.700" cy="181.500" r="9.800" fill="url(#tor)" stroke="#7a3a00" stroke-width="0.500"/><path d="M1883 171.500l7 2.500 2.500 7-3.500 7-8 2-6-5-0.500-8z" fill="url(#tbl)" stroke="#1a3a9a" stroke-width="1.200"/><path d="M1896.500 181.500h6l-3 3.500z" fill="#111"/></svg>
<svg class="a" style="left:940px;top:103px;" width="12" height="60" viewBox="0 0 12 60"></svg>
<div class="a" style="left:95px;top:284px;width:817px;height:594px;background:#fff;border:1px solid rgba(130,135,145,.45);box-shadow:0 2px 14px rgba(0,0,0,.24);"></div>
<svg class="a" style="left:105px;top:290px;" width="15" height="17" viewBox="0 0 15 17"><path d="M1.5 1h9.5l1.5 1.5v14h-11z" fill="#ffe9a2" stroke="#f0d278" stroke-width="0.6"/><path d="M10.2 8.5h3.300v8.300h-3.300z" fill="#f7d772"/></svg>
<div class="a" style="left:127px;top:292px;width:1px;height:14px;background:#b5b5b5;"></div>
<svg class="a" style="left:139px;top:292px;" width="13" height="16" viewBox="0 0 13 16"><path d="M0.5 0.5h8.5l3.500 3.500v11.500h-12z" fill="#fff" stroke="#9a9a9a"/><path d="M3 8.5l2.500 3 4.500-6" fill="none" stroke="#d9534a" stroke-width="1.3"/></svg>
<svg class="a" style="left:160px;top:290px;" width="15" height="17" viewBox="0 0 15 17"><path d="M1.5 1h9.5l1.5 1.5v14h-11z" fill="#ffe9a2" stroke="#f0d278" stroke-width="0.6"/><path d="M10.2 8.5h3.300v8.300h-3.300z" fill="#f7d772"/></svg>
<svg class="a" style="left:180px;top:296px;" width="10" height="8" viewBox="0 0 10 8"><path d="M1 0.5h8" stroke="#222" stroke-width="1"/><path d="M1 3h8l-4 4.500z" fill="#222"/></svg>
<div class="a" style="left:197px;top:292px;width:1px;height:14px;background:#b5b5b5;"></div>
<div class="t" style="left:205.5px;top:293.5px;font-size:12.00px;color:#111;letter-spacing:-0.25px;">Vector</div>
<svg class="a" style="left:785px;top:290px;" width="115" height="20" viewBox="0 0 115 20"><path d="M6 9.500h10M51.500 5h9v9h-9zM97.500 5l9.500 9.500M107 5l-9.500 9.500" fill="none" stroke="#111" stroke-width="1.1"/></svg>
<div class="a" style="left:96px;top:315px;width:56px;height:23px;background:#555555;"></div>
<div class="t" style="left:115.4px;top:320.8px;font-size:12.00px;color:#fff;letter-spacing:-0.44px;">File</div>
<div class="t" style="left:166.3px;top:320.8px;font-size:12.00px;color:#222;transform:scaleX(0.909);transform-origin:0 0;">Home</div>
<div class="t" style="left:225.5px;top:320.8px;font-size:12.00px;color:#222;transform:scaleX(0.877);transform-origin:0 0;">Share</div>
<div class="t" style="left:283.0px;top:320.8px;font-size:12.00px;color:#222;letter-spacing:-0.25px;">View</div>
<svg class="a" style="left:870px;top:320px;" width="14" height="12" viewBox="0 0 14 12"><path d="M2.500 3.500l4.500 4.500 4.500-4.500" fill="none" stroke="#9a9a9a" stroke-width="1.2"/></svg>
<svg class="a" style="left:891px;top:318px;" width="16" height="16" viewBox="0 0 16 16"><circle cx="8" cy="8" r="7.200" fill="#1979ca"/></svg>
<div class="t" style="left:895.6px;top:321.3px;font-size:12.00px;color:#fff;font-weight:bold;">?</div>
<div class="a" style="left:96px;top:338px;width:814px;height:1px;background:#dadbdc;"></div>
<svg class="a" style="left:104px;top:346px;" width="100" height="20" viewBox="0 0 100 20"><path d="M17 9.500H6M10.500 4.500L5.500 9.500l5 5" fill="none" stroke="#5a5a5a" stroke-width="1.3"/><path d="M35 9.500H46M41.500 4.500L46.500 9.500l-5 5" fill="none" stroke="#c8c8c8" stroke-width="1.3"/><path d="M61.500 8l3 3 3-3" fill="none" stroke="#7a7a7a" stroke-width="1.1"/><path d="M85 16V4.500M80 9.500l5-5 5 5" fill="none" stroke="#5a5a5a" stroke-width="1.300"/></svg>
<div class="a" style="left:202px;top:345px;width:586px;height:22px;background:#fff;border:1px solid #d9d9d9;"></div>
<svg class="a" style="left:207px;top:348px;" width="14" height="15" viewBox="0 0 15 17"><path d="M1.5 1h9.5l1.5 1.5v14h-11z" fill="#ffe9a2" stroke="#f0d278" stroke-width="0.6"/><path d="M10.2 8.5h3.300v8.300h-3.300z" fill="#f7d772"/></svg>
<div class="t" style="left:226.0px;top:349.8px;font-size:12.00px;color:#444;">«</div>
<div class="t" style="left:242.2px;top:349.8px;font-size:12.00px;color:#111;letter-spacing:-0.14px;">grasshopperscripts</div>
<div class="t" style="left:364.2px;top:349.8px;font-size:12.00px;color:#111;letter-spacing:-0.31px;">GrasshopperScripts</div>
<div class="t" style="left:489.0px;top:349.8px;font-size:12.00px;color:#111;letter-spacing:-0.42px;">GrasshopperFiles</div>
<div class="t" style="left:600.0px;top:349.8px;font-size:12.00px;color:#111;letter-spacing:-0.34px;">Vector</div>
<svg class="a" style="left:349px;top:352px;" width="7" height="9" viewBox="0 0 7 9"><path d="M1.500 1l3.500 3.500-3.500 3.500" fill="none" stroke="#666" stroke-width="1.1"/></svg>
<svg class="a" style="left:473px;top:352px;" width="7" height="9" viewBox="0 0 7 9"><path d="M1.500 1l3.500 3.500-3.500 3.500" fill="none" stroke="#666" stroke-width="1.1"/></svg>
<svg class="a" style="left:585px;top:352px;" width="7" height="9" viewBox="0 0 7 9"><path d="M1.500 1l3.500 3.500-3.500 3.500" fill="none" stroke="#666" stroke-width="1.1"/></svg>
<svg class="a" style="left:757px;top:351px;" width="12" height="10" viewBox="0 0 12 10"><path d="M1.500 2.500l4.500 4.500 4.500-4.500" fill="none" stroke="#444" stroke-width="1.400"/></svg>
<div class="a" style="left:770px;top:346px;width:1px;height:20px;background:#d9d9d9;"></div>
<svg class="a" style="left:773px;top:349px;" width="14" height="14" viewBox="0 0 14 14"><path d="M11.300 7.500A4.600 4.600 0 1 1 8.300 3.200" fill="none" stroke="#5a5a5a" stroke-width="1.300"/><path d="M7.200 0.800l3 2.600-3.600 1.400" fill="none" stroke="#5a5a5a" stroke-width="1.200"/></svg>
<div class="a" style="left:800px;top:345px;width:98px;height:22px;background:#fff;border:1px solid #d9d9d9;"></div>
<div class="t" style="left:809.2px;top:349.8px;font-size:12.00px;color:#6d6d6d;transform:scaleX(0.893);transform-origin:0 0;">Search Ve...</div>
<svg class="a" style="left:877px;top:349px;" width="14" height="14" viewBox="0 0 14 14"><circle cx="8.500" cy="5.500" r="3.800" fill="none" stroke="#555" stroke-width="1.300"/><path d="M5.800 8.200L1.500 12.500" stroke="#555" stroke-width="1.500"/></svg>
<div class="a" style="left:96px;top:830px;width:217px;height:23px;background:#d9d9d9;"></div>
<div class="t" style="left:149.0px;top:379.5px;font-size:12.00px;color:#111;letter-spacing:-0.22px;">Pictures</div>
<svg class="a" style="left:128px;top:377px;" width="16" height="16" viewBox="0 0 16 16"><rect x="0.500" y="2.500" width="15" height="11" fill="#fff" stroke="#8c97a5"/><rect x="2" y="4" width="12" height="8" fill="#9fd0f0"/><path d="M2 12V9l3-2 3 2.500 2.500-1.500L14 10v2z" fill="#2f5f8a"/><path d="M2 12v-1.500l4-1 8 1.500v1z" fill="#274a35"/></svg>
<div class="t" style="left:149.0px;top:403.5px;font-size:12.00px;color:#111;letter-spacing:-0.10px;">Downloads</div>
<svg class="a" style="left:128px;top:401px;" width="15" height="18" viewBox="0 0 15 18"><path d="M1.500 1h9l2 2v13h-11z" fill="#ffe9a2" stroke="#efd27a" stroke-width="0.600"/><path d="M10.200 8.500h3.300v8h-3.300z" fill="#f7d772"/></svg>
<div class="t" style="left:149.0px;top:427.5px;font-size:12.00px;color:#111;letter-spacing:0.05px;">Constructions</div>
<svg class="a" style="left:128px;top:425px;" width="15" height="18" viewBox="0 0 15 18"><path d="M1.500 1h9l2 2v13h-11z" fill="#ffe9a2" stroke="#efd27a" stroke-width="0.600"/><path d="M10.200 8.500h3.300v8h-3.300z" fill="#f7d772"/></svg>
<div class="t" style="left:149.0px;top:451.5px;font-size:12.00px;color:#111;transform:scaleX(0.846);transform-origin:0 0;">GIS</div>
<svg class="a" style="left:128px;top:449px;" width="15" height="18" viewBox="0 0 15 18"><path d="M1.500 1h9l2 2v13h-11z" fill="#ffe9a2" stroke="#efd27a" stroke-width="0.600"/><path d="M10.200 8.500h3.300v8h-3.300z" fill="#f7d772"/></svg>
<div class="t" style="left:149.0px;top:475.5px;font-size:12.00px;color:#111;letter-spacing:-0.14px;">Images</div>
<svg class="a" style="left:128px;top:473px;" width="15" height="18" viewBox="0 0 15 18"><path d="M1.500 1h9l2 2v13h-11z" fill="#ffe9a2" stroke="#efd27a" stroke-width="0.600"/><path d="M10.200 8.500h3.300v8h-3.300z" fill="#f7d772"/></svg>
<div class="t" style="left:149.0px;top:499.5px;font-size:12.00px;color:#111;letter-spacing:-0.17px;">Vector</div>
<svg class="a" style="left:128px;top:497px;" width="15" height="18" viewBox="0 0 15 18"><path d="M1.500 1h9l2 2v13h-11z" fill="#ffe9a2" stroke="#efd27a" stroke-width="0.600"/><path d="M10.200 8.500h3.300v8h-3.300z" fill="#f7d772"/></svg>
<div class="t" style="left:141.0px;top:531.5px;font-size:12.00px;color:#111;letter-spacing:-0.20px;">Creative Cloud Files</div>
<svg class="a" style="left:120px;top:529px;" width="17" height="18" viewBox="0 0 17 18"><path d="M1 1h10l2 2v13h-12z" fill="#ffe9a2" stroke="#efd27a" stroke-width="0.600"/><path d="M7 13.200a2.300 2.300 0 0 1 4.300-1.200l1.200 1.800a2.300 2.300 0 1 0 0.300-3M9.500 15.500a2.300 2.300 0 0 1-2.500-2.300" fill="none" stroke="#e8431f" stroke-width="1.500"/></svg>
<div class="t" style="left:141.0px;top:563.5px;font-size:12.00px;color:#111;letter-spacing:-0.21px;">OneDrive</div>
<svg class="a" style="left:119px;top:561px;" width="18" height="16" viewBox="0 0 18 16"><path d="M4.500 13.500a3.500 3.500 0 0 1-0.300-7 4.800 4.800 0 0 1 9-0.800 3.800 3.800 0 0 1 0.800 7.800z" fill="#1e7fd6"/><path d="M4.500 13.500a3.500 3.500 0 0 1 0.500-6.900l9 6.900z" fill="#1565b5"/></svg>
<div class="t" style="left:141.0px;top:595.5px;font-size:12.00px;color:#111;letter-spacing:-0.53px;">This PC</div>
<svg class="a" style="left:119px;top:593px;" width="18" height="16" viewBox="0 0 18 16"><rect x="1" y="1.500" width="16" height="10" fill="#5fb8f2"/><rect x="2.200" y="2.700" width="13.600" height="7.600" fill="#8fd4ff"/><path d="M6 13.500h6M1 15.500h16" stroke="#9aa8b5" stroke-width="1"/></svg>
<div class="t" style="left:149.0px;top:619.5px;font-size:12.00px;color:#111;letter-spacing:-0.24px;">3D Objects</div>
<svg class="a" style="left:128px;top:617px;" width="17" height="17" viewBox="0 0 17 17"><path d="M8.500 1l7 3v9l-7 3.500-7-3.500v-9z" fill="#39c2e0"/><path d="M8.500 8v8.500l-7-3.500v-9z" fill="#1b9ec0"/><path d="M8.500 8l7-4v9l-7 3.500z" fill="#66d8ef"/><path d="M1.500 4l7 4 7-4-7-3z" fill="#a7ecf8"/></svg>
<div class="t" style="left:149.0px;top:643.5px;font-size:12.00px;color:#111;letter-spacing:-0.34px;">A360 Drive</div>
<svg class="a" style="left:128px;top:641px;" width="17" height="16" viewBox="0 0 17 16"><ellipse cx="8.500" cy="8.500" rx="7.500" ry="4.500" fill="none" stroke="#9fb0bd" stroke-width="2"/><path d="M3 10a6 5 0 0 1 11-2" fill="none" stroke="#5f7f96" stroke-width="2.200"/><circle cx="9" cy="9" r="2" fill="#7f9db3"/></svg>
<div class="t" style="left:149.0px;top:667.5px;font-size:12.00px;color:#111;letter-spacing:-0.22px;">Desktop</div>
<svg class="a" style="left:128px;top:665px;" width="17" height="16" viewBox="0 0 17 16"><rect x="1" y="3" width="16" height="10.500" fill="#1a8fe8"/><rect x="1" y="3" width="16" height="7" fill="#2f9bf0"/><path d="M2 12.500h1.500M4.500 12.500h1.500M14 12.500h1.500" stroke="#cfe8ff" stroke-width="1"/></svg>
<div class="t" style="left:149.0px;top:691.5px;font-size:12.00px;color:#111;letter-spacing:0.03px;">Documents</div>
<svg class="a" style="left:129px;top:689px;" width="15" height="17" viewBox="0 0 15 17"><path d="M1.500 0.500h9l3 3v13h-12z" fill="#fff" stroke="#8c97a5"/><path d="M3.500 5.500h8M3.500 7.500h8M3.500 9.500h8M3.500 11.500h8M3.500 13.500h5" stroke="#5c8fc4" stroke-width="0.900"/><rect x="3.500" y="2" width="3.500" height="2.500" fill="#5c8fc4"/></svg>
<div class="t" style="left:149.0px;top:715.5px;font-size:12.00px;color:#111;letter-spacing:-0.04px;">Downloads</div>
<svg class="a" style="left:128px;top:713px;" width="16" height="17" viewBox="0 0 16 17"><path d="M5.500 0.500h5v7h4.500l-7 8-7-8h4.500z" fill="#2e8de6"/><path d="M1 15.500h14" stroke="#2e8de6" stroke-width="1.200" opacity="0"/></svg>
<div class="t" style="left:149.0px;top:739.5px;font-size:12.00px;color:#111;letter-spacing:0.13px;">Music</div>
<svg class="a" style="left:129px;top:737px;" width="15" height="17" viewBox="0 0 15 17"><path d="M6 1.500v10.500a3 2.600 0 1 1-1.800-2.400v-8.100zM6 1.500c3 0.500 6 2.500 5 7-0.200-2.500-2-4-5-4.500z" fill="#1e8fe6"/></svg>
<div class="t" style="left:149.0px;top:763.5px;font-size:12.00px;color:#111;letter-spacing:-0.22px;">Pictures</div>
<svg class="a" style="left:128px;top:761px;" width="16" height="16" viewBox="0 0 16 16"><rect x="0.500" y="2.500" width="15" height="11" fill="#fff" stroke="#8c97a5"/><rect x="2" y="4" width="12" height="8" fill="#9fd0f0"/><path d="M2 12V9l3-2 3 2.500 2.500-1.500L14 10v2z" fill="#2f5f8a"/><path d="M2 12v-1.500l4-1 8 1.500v1z" fill="#274a35"/></svg>
<div class="t" style="left:149.0px;top:787.5px;font-size:12.00px;color:#111;letter-spacing:-0.25px;">Videos</div>
<svg class="a" style="left:128px;top:785px;" width="16" height="17" viewBox="0 0 16 17"><rect x="0.500" y="0.500" width="15" height="16" fill="#3a3a3a"/><rect x="3.500" y="1.500" width="9" height="6.500" fill="#c98a3a"/><rect x="3.500" y="9" width="9" height="6.500" fill="#3f6fd0"/><path d="M1 2.500h1.500M1 5.500h1.500M1 8.500h1.500M1 11.500h1.500M1 14.500h1.500M13.500 2.500h1.500M13.500 5.500h1.500M13.500 8.500h1.500M13.500 11.500h1.500M13.500 14.500h1.500" stroke="#eee" stroke-width="1.400"/></svg>
<div class="t" style="left:149.0px;top:811.5px;font-size:12.00px;color:#111;letter-spacing:-0.28px;">Local Disk (C:)</div>
<svg class="a" style="left:128px;top:809px;" width="16" height="16" viewBox="0 0 16 16"><path d="M0.500 2.500h2.500v2h-2.500zM4 2.500h2.500v2h-2.500zM0.500 5.500h2.500v2h-2.500zM4 5.500h2.500v2h-2.500z" fill="#1ba1e2"/><path d="M2 10h12l1.500 3v2.500h-15v-2.500z" fill="#cfd4d8"/><rect x="0.500" y="12.500" width="15" height="3" fill="#3a3f44"/><rect x="11.500" y="13.500" width="2.500" height="1" fill="#7fe07f"/></svg>
<div class="t" style="left:149.0px;top:835.5px;font-size:12.00px;color:#111;letter-spacing:-0.49px;">T (D:)</div>
<svg class="a" style="left:128px;top:833px;" width="16" height="16" viewBox="0 0 16 16"><path d="M2 9.500h12l1.500 3v2.500h-15v-2.500z" fill="#cfd4d8"/><rect x="0.500" y="12" width="15" height="3" fill="#3a3f44"/><rect x="11.500" y="13" width="2.500" height="1" fill="#ddd"/></svg>
<svg class="a" style="left:298px;top:379px;" width="12" height="12" viewBox="0 0 12 12"><path d="M6.500 1l4.500 4.500-1.500 0.500-2 2-0.500 2.500-4.500-4.500 2.500-0.500 2-2z" fill="#8a8a8a"/><path d="M4.500 7.500L1 11" stroke="#8a8a8a" stroke-width="1.2"/></svg>
<svg class="a" style="left:298px;top:403px;" width="12" height="12" viewBox="0 0 12 12"><path d="M6.500 1l4.500 4.500-1.500 0.500-2 2-0.500 2.500-4.500-4.500 2.500-0.500 2-2z" fill="#8a8a8a"/><path d="M4.500 7.500L1 11" stroke="#8a8a8a" stroke-width="1.2"/></svg>
<div class="a" style="left:313px;top:375px;width:16px;height:477px;background:#f0f0f0;"></div>
<div class="a" style="left:313px;top:460px;width:16px;height:308px;background:#cdcdcd;"></div>
<svg class="a" style="left:313px;top:377px;" width="16" height="14" viewBox="0 0 16 14"><path d="M4.500 9l3.500-4 3.500 4" fill="none" stroke="#333" stroke-width="1.600"/></svg>
<svg class="a" style="left:313px;top:838px;" width="16" height="14" viewBox="0 0 16 14"><path d="M4.500 4.500l3.500 4 3.500-4" fill="none" stroke="#333" stroke-width="1.600"/></svg>
<div class="t" style="left:350.6px;top:380.6px;font-size:12.00px;color:#4c607a;letter-spacing:-0.15px;">Name</div>
<div class="t" style="left:611.4px;top:380.6px;font-size:12.00px;color:#4c607a;letter-spacing:0.01px;">Date modified</div>
<div class="t" style="left:755.7px;top:380.6px;font-size:12.00px;color:#4c607a;transform:scaleX(0.903);transform-origin:0 0;">Type</div>
<div class="t" style="left:875.2px;top:380.6px;font-size:12.00px;color:#4c607a;transform:scaleX(0.839);transform-origin:0 0;">Size</div>
<div class="a" style="left:604px;top:374px;width:1px;height:25px;background:#e5e5e5;"></div>
<div class="a" style="left:748px;top:374px;width:1px;height:25px;background:#e5e5e5;"></div>
<div class="a" style="left:868px;top:374px;width:1px;height:25px;background:#e5e5e5;"></div>
<svg class="a" style="left:470px;top:373px;" width="10" height="7" viewBox="0 0 10 7"><path d="M1.500 5.500l3.500-3.500 3.500 3.500" fill="none" stroke="#777" stroke-width="1"/></svg>
<div class="a" style="left:347px;top:531px;width:563px;height:21px;background:#cce8ff;border:1px solid #99d1ff;"></div>
<div class="t" style="left:371.0px;top:410.2px;font-size:12.00px;color:#111;letter-spacing:-0.01px;">ClipVector.gh</div>
<div class="t" style="left:611.4px;top:410.2px;font-size:12.00px;color:#6d6d6d;letter-spacing:-0.32px;">3/23/2020 1:19 PM</div>
<div class="t" style="left:755.7px;top:410.2px;font-size:12.00px;color:#6d6d6d;letter-spacing:-0.29px;">Grasshopper Defin...</div>
<svg class="a" style="left:352px;top:406.5px;" width="14" height="17" viewBox="0 0 14 17"><path d="M0.500 0.500h9l4 4v12h-13z" fill="#fdfdff" stroke="#a9b4c6"/><path d="M9.500 0.500v4h4" fill="#e6ebf5" stroke="#a9b4c6"/><path d="M2 14.500q-0.800-3 1-5.200l1.600-1.300 2.200 1.500q1.800 2.200 0.800 5z" fill="#27439c"/><circle cx="4.300" cy="7.800" r="1.500" fill="#27439c"/><path d="M5.500 8.500l4-6" stroke="#6f8ad8" stroke-width="0.900"/><path d="M7 12.500h4.500v1.500h-4.500z" fill="#3f5fc0"/><path d="M3 11.500l3 1.500" stroke="#9fb4ee" stroke-width="0.800"/></svg>
<div class="t" style="left:371.0px;top:431.2px;font-size:12.00px;color:#111;letter-spacing:-0.03px;">DownloadOSM.gh</div>
<div class="t" style="left:611.4px;top:431.2px;font-size:12.00px;color:#6d6d6d;letter-spacing:-0.32px;">3/23/2020 1:19 PM</div>
<div class="t" style="left:755.7px;top:431.2px;font-size:12.00px;color:#6d6d6d;letter-spacing:-0.29px;">Grasshopper Defin...</div>
<svg class="a" style="left:352px;top:427.5px;" width="14" height="17" viewBox="0 0 14 17"><path d="M0.500 0.500h9l4 4v12h-13z" fill="#fdfdff" stroke="#a9b4c6"/><path d="M9.500 0.500v4h4" fill="#e6ebf5" stroke="#a9b4c6"/><path d="M2 14.500q-0.800-3 1-5.200l1.600-1.300 2.200 1.500q1.800 2.200 0.800 5z" fill="#27439c"/><circle cx="4.300" cy="7.800" r="1.500" fill="#27439c"/><path d="M5.500 8.500l4-6" stroke="#6f8ad8" stroke-width="0.900"/><path d="M7 12.500h4.500v1.500h-4.500z" fill="#3f5fc0"/><path d="M3 11.500l3 1.500" stroke="#9fb4ee" stroke-width="0.800"/></svg>
<div class="t" style="left:371.0px;top:452.2px;font-size:12.00px;color:#111;letter-spacing:0.02px;">DownloadOSMCustomQuery.gh</div>
<div class="t" style="left:611.4px;top:452.2px;font-size:12.00px;color:#6d6d6d;letter-spacing:-0.32px;">3/23/2020 1:19 PM</div>
<div class="t" style="left:755.7px;top:452.2px;font-size:12.00px;color:#6d6d6d;letter-spacing:-0.29px;">Grasshopper Defin...</div>
<svg class="a" style="left:352px;top:448.5px;" width="14" height="17" viewBox="0 0 14 17"><path d="M0.500 0.500h9l4 4v12h-13z" fill="#fdfdff" stroke="#a9b4c6"/><path d="M9.500 0.500v4h4" fill="#e6ebf5" stroke="#a9b4c6"/><path d="M2 14.500q-0.800-3 1-5.200l1.600-1.300 2.200 1.500q1.800 2.200 0.800 5z" fill="#27439c"/><circle cx="4.300" cy="7.800" r="1.500" fill="#27439c"/><path d="M5.500 8.500l4-6" stroke="#6f8ad8" stroke-width="0.900"/><path d="M7 12.500h4.500v1.500h-4.500z" fill="#3f5fc0"/><path d="M3 11.500l3 1.500" stroke="#9fb4ee" stroke-width="0.800"/></svg>
<div class="t" style="left:371.0px;top:473.2px;font-size:12.00px;color:#111;letter-spacing:-0.15px;">OpenGISAllTogether.gh</div>
<div class="t" style="left:611.4px;top:473.2px;font-size:12.00px;color:#6d6d6d;letter-spacing:-0.32px;">3/23/2020 1:19 PM</div>
<div class="t" style="left:755.7px;top:473.2px;font-size:12.00px;color:#6d6d6d;letter-spacing:-0.29px;">Grasshopper Defin...</div>
<svg class="a" style="left:352px;top:469.5px;" width="14" height="17" viewBox="0 0 14 17"><path d="M0.500 0.500h9l4 4v12h-13z" fill="#fdfdff" stroke="#a9b4c6"/><path d="M9.500 0.500v4h4" fill="#e6ebf5" stroke="#a9b4c6"/><path d="M2 14.500q-0.800-3 1-5.200l1.600-1.300 2.200 1.500q1.800 2.200 0.800 5z" fill="#27439c"/><circle cx="4.300" cy="7.800" r="1.500" fill="#27439c"/><path d="M5.500 8.500l4-6" stroke="#6f8ad8" stroke-width="0.900"/><path d="M7 12.500h4.500v1.500h-4.500z" fill="#3f5fc0"/><path d="M3 11.500l3 1.500" stroke="#9fb4ee" stroke-width="0.800"/></svg>
<div class="t" style="left:371.0px;top:494.2px;font-size:12.00px;color:#111;letter-spacing:-0.14px;">OpenGISConstructions.gh</div>
<div class="t" style="left:611.4px;top:494.2px;font-size:12.00px;color:#6d6d6d;letter-spacing:-0.32px;">3/23/2020 1:19 PM</div>
<div class="t" style="left:755.7px;top:494.2px;font-size:12.00px;color:#6d6d6d;letter-spacing:-0.29px;">Grasshopper Defin...</div>
<svg class="a" style="left:352px;top:490.5px;" width="14" height="17" viewBox="0 0 14 17"><path d="M0.500 0.500h9l4 4v12h-13z" fill="#fdfdff" stroke="#a9b4c6"/><path d="M9.500 0.500v4h4" fill="#e6ebf5" stroke="#a9b4c6"/><path d="M2 14.500q-0.800-3 1-5.200l1.600-1.300 2.200 1.500q1.800 2.200 0.800 5z" fill="#27439c"/><circle cx="4.300" cy="7.800" r="1.500" fill="#27439c"/><path d="M5.500 8.500l4-6" stroke="#6f8ad8" stroke-width="0.900"/><path d="M7 12.500h4.500v1.500h-4.500z" fill="#3f5fc0"/><path d="M3 11.500l3 1.500" stroke="#9fb4ee" stroke-width="0.800"/></svg>
<div class="t" style="left:371.0px;top:515.2px;font-size:12.00px;color:#111;letter-spacing:-0.16px;">OpenGISConstructionsTerrain.gh</div>
<div class="t" style="left:611.4px;top:515.2px;font-size:12.00px;color:#6d6d6d;letter-spacing:-0.32px;">3/23/2020 1:19 PM</div>
<div class="t" style="left:755.7px;top:515.2px;font-size:12.00px;color:#6d6d6d;letter-spacing:-0.29px;">Grasshopper Defin...</div>
<svg class="a" style="left:352px;top:511.5px;" width="14" height="17" viewBox="0 0 14 17"><path d="M0.500 0.500h9l4 4v12h-13z" fill="#fdfdff" stroke="#a9b4c6"/><path d="M9.500 0.500v4h4" fill="#e6ebf5" stroke="#a9b4c6"/><path d="M2 14.500q-0.800-3 1-5.200l1.600-1.300 2.200 1.500q1.800 2.200 0.800 5z" fill="#27439c"/><circle cx="4.300" cy="7.800" r="1.500" fill="#27439c"/><path d="M5.500 8.500l4-6" stroke="#6f8ad8" stroke-width="0.900"/><path d="M7 12.500h4.500v1.500h-4.500z" fill="#3f5fc0"/><path d="M3 11.500l3 1.500" stroke="#9fb4ee" stroke-width="0.800"/></svg>
<div class="t" style="left:371.0px;top:536.2px;font-size:12.00px;color:#111;letter-spacing:-0.32px;">OpenGISTerrain.gh</div>
<div class="t" style="left:611.4px;top:536.2px;font-size:12.00px;color:#6d6d6d;letter-spacing:-0.32px;">3/23/2020 1:19 PM</div>
<div class="t" style="left:755.7px;top:536.2px;font-size:12.00px;color:#6d6d6d;letter-spacing:-0.29px;">Grasshopper Defin...</div>
<svg class="a" style="left:352px;top:532.5px;" width="14" height="17" viewBox="0 0 14 17"><path d="M0.500 0.500h9l4 4v12h-13z" fill="#fdfdff" stroke="#a9b4c6"/><path d="M9.500 0.500v4h4" fill="#e6ebf5" stroke="#a9b4c6"/><path d="M2 14.500q-0.800-3 1-5.200l1.600-1.300 2.200 1.500q1.800 2.200 0.800 5z" fill="#27439c"/><circle cx="4.300" cy="7.800" r="1.500" fill="#27439c"/><path d="M5.500 8.500l4-6" stroke="#6f8ad8" stroke-width="0.900"/><path d="M7 12.500h4.500v1.500h-4.500z" fill="#3f5fc0"/><path d="M3 11.500l3 1.500" stroke="#9fb4ee" stroke-width="0.800"/></svg>
<div class="t" style="left:371.0px;top:557.2px;font-size:12.00px;color:#111;letter-spacing:0.01px;">WriteVector.gh</div>
<div class="t" style="left:611.4px;top:557.2px;font-size:12.00px;color:#6d6d6d;letter-spacing:-0.32px;">3/23/2020 1:19 PM</div>
<div class="t" style="left:755.7px;top:557.2px;font-size:12.00px;color:#6d6d6d;letter-spacing:-0.29px;">Grasshopper Defin...</div>
<svg class="a" style="left:352px;top:553.5px;" width="14" height="17" viewBox="0 0 14 17"><path d="M0.500 0.500h9l4 4v12h-13z" fill="#fdfdff" stroke="#a9b4c6"/><path d="M9.500 0.500v4h4" fill="#e6ebf5" stroke="#a9b4c6"/><path d="M2 14.500q-0.800-3 1-5.200l1.600-1.300 2.200 1.500q1.800 2.200 0.800 5z" fill="#27439c"/><circle cx="4.300" cy="7.800" r="1.500" fill="#27439c"/><path d="M5.500 8.500l4-6" stroke="#6f8ad8" stroke-width="0.900"/><path d="M7 12.500h4.500v1.500h-4.500z" fill="#3f5fc0"/><path d="M3 11.500l3 1.500" stroke="#9fb4ee" stroke-width="0.800"/></svg>
<div class="a" style="left:333px;top:837px;width:575px;height:15px;background:#f0f0f0;"></div>
<div class="a" style="left:350px;top:837px;width:500px;height:15px;background:#cdcdcd;"></div>
<div class="a" style="left:333px;top:852px;width:575px;height:1px;background:#fff;"></div>
<svg class="a" style="left:335px;top:838px;" width="12" height="14" viewBox="0 0 12 14"><path d="M8 3l-4 4 4 4" fill="none" stroke="#333" stroke-width="1.600"/></svg>
<svg class="a" style="left:895px;top:838px;" width="12" height="14" viewBox="0 0 12 14"><path d="M4 3l4 4-4 4" fill="none" stroke="#333" stroke-width="1.600"/></svg>
<div class="t" style="left:110.4px;top:859.2px;font-size:12.00px;color:#39465a;letter-spacing:-0.21px;">8 items</div>
<div class="t" style="left:169.6px;top:859.2px;font-size:12.00px;color:#39465a;letter-spacing:-0.33px;">1 item selected  19.1 KB</div>
<div class="a" style="left:862px;top:853px;width:22px;height:23px;background:#c3e7fb;border:1px solid #2f8fd0;"></div>
<svg class="a" style="left:866px;top:858px;" width="16" height="14" viewBox="0 0 16 14"><path d="M5.500 2.500h3.500M11 2.500h3.500M5.500 6.500h3.500M11 6.500h3.500M5.500 10.500h3.500M11 10.500h3.500" stroke="#4a5a6a" stroke-width="1"/><path d="M0.500 0.500h4v4h-4zM0.500 4.500h4v4h-4zM0.500 8.500h4v4h-4z" fill="#fff" stroke="#8a9aa8" stroke-width="0.800"/><path d="M2 2h1v1h-1zM2 6h1v1h-1zM2 10h1v1h-1z" fill="#333"/></svg>
<svg class="a" style="left:888px;top:858px;" width="14" height="11" viewBox="0 0 14 11"><rect x="0.500" y="0.500" width="13" height="9" fill="#fff" stroke="#6a7f99"/><rect x="2" y="2" width="10" height="6" fill="#4f8fd0"/><path d="M2 8l3-3 2 2 2-1.500 3 2.500z" fill="#2b4f7a"/></svg>
<div class="a" style="left:0px;top:1046.7px;width:1907px;height:2.5px;background:#1b2229;"></div>
</body></html>
